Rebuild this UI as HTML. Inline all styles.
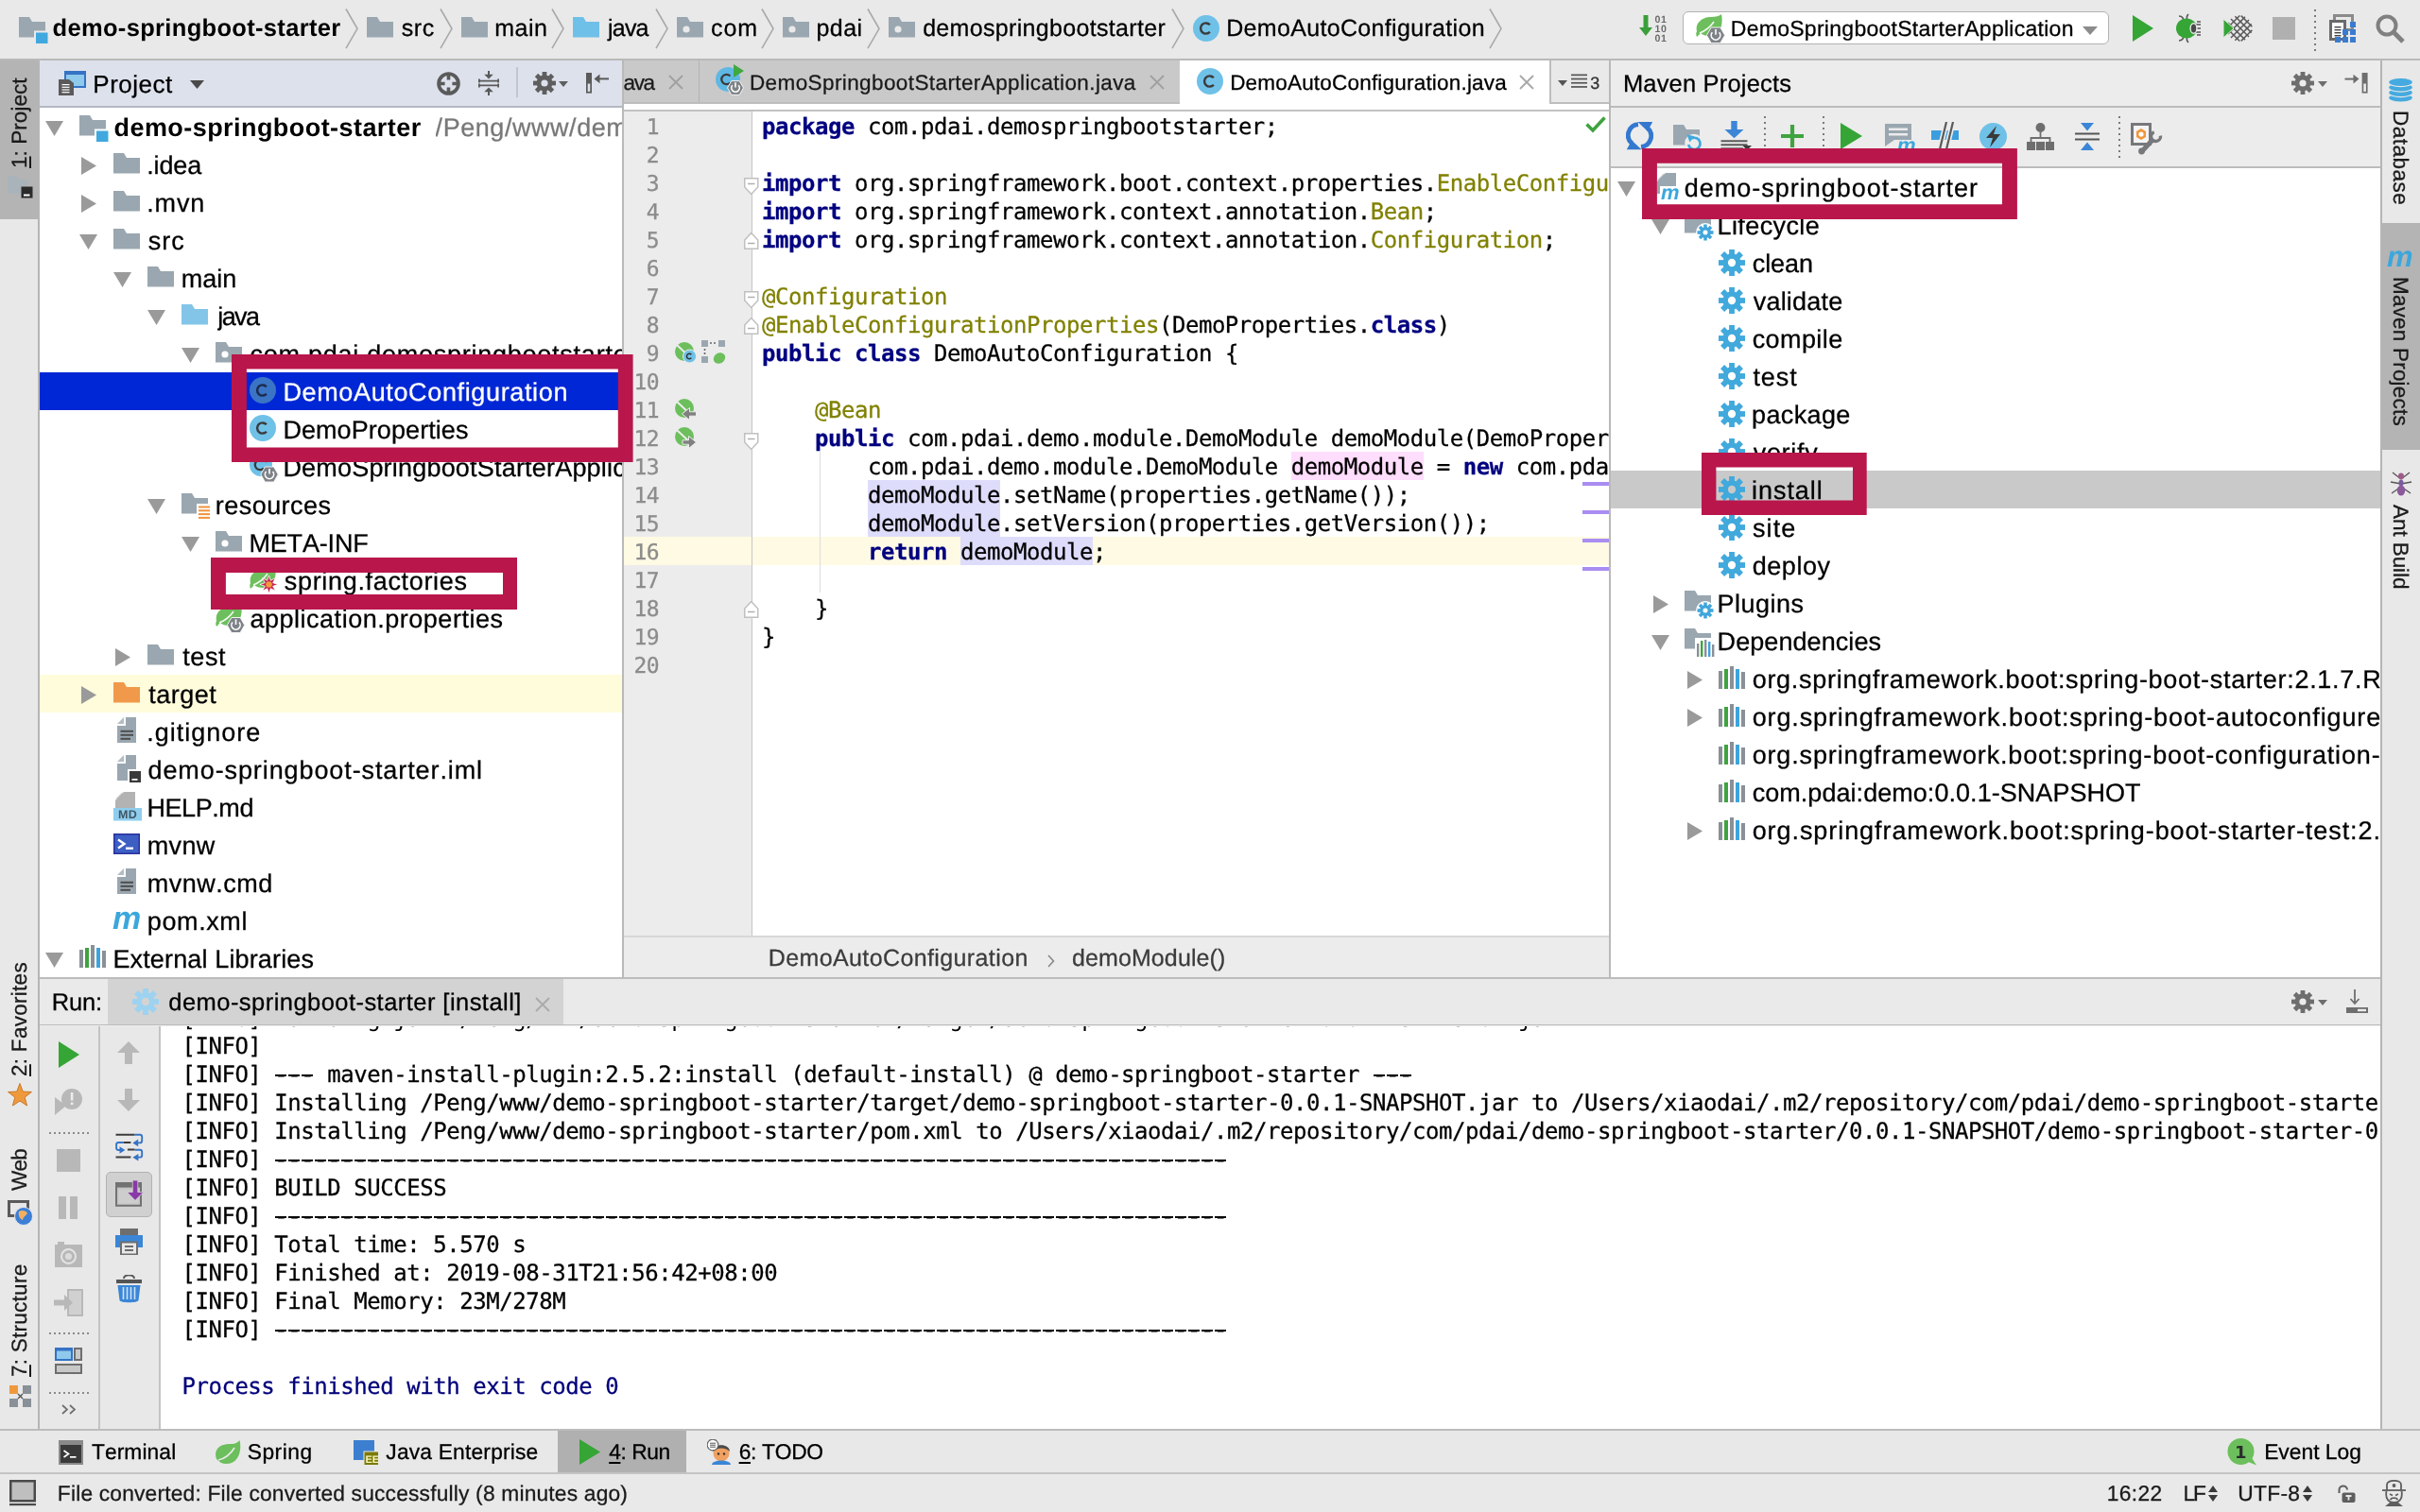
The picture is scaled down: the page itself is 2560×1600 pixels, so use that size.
<!DOCTYPE html>
<html lang="en"><head><meta charset="utf-8"><title>demo-springboot-starter - DemoAutoConfiguration.java</title>
<style>
*{margin:0;padding:0}html,body{width:2560px;height:1600px;overflow:hidden;background:#ececec}
body{position:relative;will-change:transform;font-kerning:none;-webkit-font-smoothing:antialiased;text-rendering:geometricPrecision}
body>div,body>span,body>svg,div>span{position:absolute;display:block;white-space:pre}
body>span{-webkit-text-stroke:0.28px}
span u{text-decoration:underline;text-decoration-thickness:1.5px;text-underline-offset:2.5px}
.code{font-family:"DejaVu Sans Mono","Liberation Mono",monospace;font-size:24px;line-height:30px;height:30px;letter-spacing:-0.453px;color:#000;overflow:hidden}
.code b{font-weight:bold}.code span{position:static;display:inline}
.ln{font-family:"DejaVu Sans Mono","Liberation Mono",monospace;font-size:23px;line-height:30px;height:30px;letter-spacing:-0.45px;color:#8c8c8c;text-align:right}
.con{font-family:"DejaVu Sans Mono","Liberation Mono",monospace;font-size:24px;line-height:30px;height:30px;letter-spacing:-0.453px;overflow:hidden}
</style></head>
<body>
<div style="left:0px;top:0px;width:2560px;height:62px;background:#e9e9e9;"></div>
<div style="left:0px;top:62px;width:2560px;height:2px;background:#b9b9b9;"></div>
<div style="left:0px;top:64px;width:40px;height:1449px;background:#e8e8e8;"></div>
<div style="left:40px;top:64px;width:2px;height:1449px;background:#b5b5b5;"></div>
<div style="left:0px;top:64px;width:40px;height:168px;background:#b4b4b4;"></div>
<div style="left:2520px;top:64px;width:40px;height:1449px;background:#e8e8e8;"></div>
<div style="left:2518px;top:64px;width:2px;height:1449px;background:#b5b5b5;"></div>
<div style="left:2520px;top:236px;width:40px;height:240px;background:#b4b4b4;"></div>
<div style="left:42px;top:64px;width:616px;height:48px;background:#dde1ec;"></div>
<div style="left:42px;top:112.4px;width:616px;height:1.6px;background:#b4b8c2;"></div>
<div style="left:42px;top:114px;width:616px;height:920px;background:#fff;"></div>
<div style="left:658px;top:64px;width:2px;height:970px;background:#b9b9b9;"></div>
<div style="left:660px;top:64px;width:1042px;height:46px;background:#c9c9c9;"></div>
<div style="left:660px;top:108px;width:1042px;height:2px;background:#bebebe;"></div>
<div style="left:660px;top:110px;width:1042px;height:6px;background:#fff;"></div>
<div style="left:660px;top:116px;width:1042px;height:2px;background:#c2c2c2;"></div>
<div style="left:660px;top:118px;width:135px;height:873px;background:#ececec;"></div>
<div style="left:796px;top:118px;width:906px;height:873px;background:#fff;"></div>
<div style="left:794.5px;top:118px;width:1.5px;height:873px;background:#c6c6c6;"></div>
<div style="left:660px;top:991px;width:1042px;height:43px;background:#ececec;"></div>
<div style="left:660px;top:990px;width:1042px;height:1.5px;background:#d8d8d8;"></div>
<div style="left:1702px;top:64px;width:2px;height:970px;background:#b9b9b9;"></div>
<div style="left:1704px;top:64px;width:814px;height:48px;background:#ececec;"></div>
<div style="left:1704px;top:112px;width:814px;height:2px;background:#bcbcbc;"></div>
<div style="left:1704px;top:114px;width:814px;height:62px;background:#ececec;"></div>
<div style="left:1704px;top:176px;width:814px;height:2px;background:#bcbcbc;"></div>
<div style="left:1704px;top:178px;width:814px;height:856px;background:#fff;"></div>
<div style="left:42px;top:1034px;width:2476px;height:2px;background:#bcbcbc;"></div>
<div style="left:42px;top:1036px;width:2476px;height:48px;background:#eaeaea;"></div>
<div style="left:42px;top:1083.6px;width:2476px;height:1.9px;background:#bcbcbc;"></div>
<div style="left:42px;top:1086px;width:62px;height:426px;background:#e8e8e8;"></div>
<div style="left:104px;top:1086px;width:2px;height:426px;background:#c3c3c3;"></div>
<div style="left:106px;top:1086px;width:62px;height:426px;background:#e8e8e8;"></div>
<div style="left:168px;top:1086px;width:2px;height:426px;background:#c3c3c3;"></div>
<div style="left:170px;top:1086px;width:2348px;height:426px;background:#fff;"></div>
<div style="left:0px;top:1512px;width:2560px;height:2px;background:#bcbcbc;"></div>
<div style="left:0px;top:1514px;width:2560px;height:44px;background:#e8e8e8;"></div>
<div style="left:0px;top:1558px;width:2560px;height:2px;background:#c4c4c4;"></div>
<div style="left:0px;top:1560px;width:2560px;height:40px;background:#e9e9e9;"></div>
<svg style="left:20px;top:18px;" width="31" height="28" viewBox="0 0 31 28"><path d="M0,0 H11 L14,5 H28 V21.5 H0 Z" fill="#9aa7b0"/><rect x="16" y="14.5" width="16" height="15" fill="#e9e9e9"/><rect x="18" y="16.5" width="12.5" height="11.5" fill="#40a8de"/></svg>
<span style="left:55.55px;top:14.16px;line-height:33px;height:33px;font-size:25.5px;color:#000;letter-spacing:0.324px;font-family:'Liberation Sans',sans-serif;font-weight:bold;-webkit-text-stroke:0;">demo-springboot-starter</span>
<svg style="left:365px;top:9px;" width="14" height="42.6" viewBox="0 0 14 42.6"><path d="M1,0.5 L13,21.3 L1,42.1" fill="none" stroke="#a9a9a9" stroke-width="1.6"/></svg>
<svg style="left:388px;top:18px;" width="28" height="22" viewBox="0 0 28 22"><path d="M0,0 H11 L14,5 H28 V21.5 H0 Z" fill="#9aa7b0"/></svg>
<span style="left:424.70px;top:13.93px;line-height:32px;height:32px;font-size:25px;color:#000;letter-spacing:0.565px;font-family:'Liberation Sans',sans-serif;">src</span>
<svg style="left:464.5px;top:9px;" width="14" height="42.6" viewBox="0 0 14 42.6"><path d="M1,0.5 L13,21.3 L1,42.1" fill="none" stroke="#a9a9a9" stroke-width="1.6"/></svg>
<svg style="left:488px;top:18px;" width="28" height="22" viewBox="0 0 28 22"><path d="M0,0 H11 L14,5 H28 V21.5 H0 Z" fill="#9aa7b0"/></svg>
<span style="left:523.34px;top:13.93px;line-height:32px;height:32px;font-size:25px;color:#000;letter-spacing:0.432px;font-family:'Liberation Sans',sans-serif;">main</span>
<svg style="left:582.5px;top:9px;" width="14" height="42.6" viewBox="0 0 14 42.6"><path d="M1,0.5 L13,21.3 L1,42.1" fill="none" stroke="#a9a9a9" stroke-width="1.6"/></svg>
<svg style="left:606px;top:18px;" width="28" height="22" viewBox="0 0 28 22"><path d="M0,0 H11 L14,5 H28 V21.5 H0 Z" fill="#6fc0e8"/></svg>
<span style="left:643.11px;top:13.93px;line-height:32px;height:32px;font-size:25px;color:#000;letter-spacing:-0.824px;font-family:'Liberation Sans',sans-serif;">java</span>
<svg style="left:692.5px;top:9px;" width="14" height="42.6" viewBox="0 0 14 42.6"><path d="M1,0.5 L13,21.3 L1,42.1" fill="none" stroke="#a9a9a9" stroke-width="1.6"/></svg>
<svg style="left:716px;top:18px;" width="28" height="22" viewBox="0 0 28 22"><path d="M0,0 H11 L14,5 H28 V21.5 H0 Z" fill="#9aa7b0"/><circle cx="10" cy="13" r="3.6" fill="#e9e9e9"/></svg>
<span style="left:751.94px;top:13.93px;line-height:32px;height:32px;font-size:25px;color:#000;letter-spacing:0.940px;font-family:'Liberation Sans',sans-serif;">com</span>
<svg style="left:804.7px;top:9px;" width="14" height="42.6" viewBox="0 0 14 42.6"><path d="M1,0.5 L13,21.3 L1,42.1" fill="none" stroke="#a9a9a9" stroke-width="1.6"/></svg>
<svg style="left:828px;top:18px;" width="28" height="22" viewBox="0 0 28 22"><path d="M0,0 H11 L14,5 H28 V21.5 H0 Z" fill="#9aa7b0"/><circle cx="10" cy="13" r="3.6" fill="#e9e9e9"/></svg>
<span style="left:863.39px;top:13.93px;line-height:32px;height:32px;font-size:25px;color:#000;letter-spacing:0.510px;font-family:'Liberation Sans',sans-serif;">pdai</span>
<svg style="left:916.5px;top:9px;" width="14" height="42.6" viewBox="0 0 14 42.6"><path d="M1,0.5 L13,21.3 L1,42.1" fill="none" stroke="#a9a9a9" stroke-width="1.6"/></svg>
<svg style="left:940px;top:18px;" width="28" height="22" viewBox="0 0 28 22"><path d="M0,0 H11 L14,5 H28 V21.5 H0 Z" fill="#9aa7b0"/><circle cx="10" cy="13" r="3.6" fill="#e9e9e9"/></svg>
<span style="left:976.15px;top:13.93px;line-height:32px;height:32px;font-size:25px;color:#000;letter-spacing:0.322px;font-family:'Liberation Sans',sans-serif;">demospringbootstarter</span>
<svg style="left:1238.5px;top:9px;" width="14" height="42.6" viewBox="0 0 14 42.6"><path d="M1,0.5 L13,21.3 L1,42.1" fill="none" stroke="#a9a9a9" stroke-width="1.6"/></svg>
<svg style="left:1261.8px;top:16px;" width="28" height="28" viewBox="0 0 28 28"><circle cx="14.0" cy="14.0" r="14.0" fill="#6fc1e8"/><path d="M17.86,10.25 A5.6000000000000005,5.6000000000000005 0 1 0 17.86,17.75" fill="none" stroke="#3b3b3b" stroke-width="2.4499999999999997"/></svg>
<span style="left:1297.15px;top:13.93px;line-height:32px;height:32px;font-size:25px;color:#000;letter-spacing:0.333px;font-family:'Liberation Sans',sans-serif;">DemoAutoConfiguration</span>
<svg style="left:1574.5px;top:9px;" width="14" height="42.6" viewBox="0 0 14 42.6"><path d="M1,0.5 L13,21.3 L1,42.1" fill="none" stroke="#a9a9a9" stroke-width="1.6"/></svg>
<svg style="left:1734px;top:16px;overflow:visible;" width="30" height="28" viewBox="0 0 30 28"><path d="M4.5,0 H9.5 V13 H14 L7,22 L0,13 H4.5 Z" fill="#3a9e3a"/><text x="16.6" y="8.3" font-family="Liberation Sans,sans-serif" font-weight="bold" font-size="10.6" fill="#6a6a6a" letter-spacing="0.4">01</text><text x="16.6" y="18.3" font-family="Liberation Sans,sans-serif" font-weight="bold" font-size="10.6" fill="#6a6a6a" letter-spacing="0.4">10</text><text x="16.6" y="28.3" font-family="Liberation Sans,sans-serif" font-weight="bold" font-size="10.6" fill="#6a6a6a" letter-spacing="0.4">01</text></svg>
<div style="left:1780.3px;top:12px;width:448.5px;height:32.5px;background:#fff;border:1.5px solid #b2b2b2;border-radius:6px;box-sizing:content-box"></div>
<svg style="left:1794px;top:14px;overflow:visible;" width="32" height="32" viewBox="0 0 32 32"><g transform="translate(0,2)"><path d="M1,17 C-1,8 7,2 16,2 C21,2 25,1 27,-1 C29,8 27,22 14,22 C10,22 7,21 5,19 C3,21 2,22 1,23 C0,21 0,19 1,17 Z" fill="#6cbf5c"/><path d="M4,19 C9,17 15,13 19,7" fill="none" stroke="#fff" stroke-width="1.6" opacity="0.9"/></g><polygon points="30.6,23.3 25.8,31.6 16.2,31.6 11.4,23.3 16.2,15.0 25.8,15.0" fill="#7f8388" stroke="#f4f4f4" stroke-width="1"/><path d="M17.32,20.21 A4.80,4.80 0 1 0 24.68,20.21" fill="none" stroke="#fff" stroke-width="1.6"/><path d="M21,17.0 V22.8" stroke="#fff" stroke-width="1.6"/></svg>
<span style="left:1830.81px;top:15.03px;line-height:30px;height:30px;font-size:23px;color:#000;letter-spacing:0.275px;font-family:'Liberation Sans',sans-serif;">DemoSpringbootStarterApplication</span>
<svg style="left:2203px;top:28px;" width="16" height="9" viewBox="0 0 16 9"><path d="M0,0 H16 L8.0,9 Z" fill="#8c8c8c"/></svg>
<svg style="left:2256px;top:16px;" width="22" height="28" viewBox="0 0 22 28"><path d="M0,0 L22,14.0 L0,28 Z" fill="#35a535"/></svg>
<svg style="left:2301px;top:14px;" width="30" height="32" viewBox="0 0 30 32"><g stroke="#555" stroke-width="1.6" fill="none"><path d="M4,3 C8,3 9,6 9,9 M4,29 C8,29 9,26 9,23 M14,1 C12,3 12,5 13,7 M14,31 C12,29 12,27 13,25 M27,9 H23 M27,23 H23 M22,12 h5 M22,16 h5 M22,20 h5"/></g><ellipse cx="12" cy="16" rx="11" ry="10.5" fill="#35a535"/><ellipse cx="19.5" cy="16" rx="3.4" ry="5.2" fill="#4a4a4a" stroke="#e9e9e9" stroke-width="1.4"/></svg>
<svg style="left:2352px;top:16px;" width="32" height="28" viewBox="0 0 32 28"><path d="M3.50,13.68 L17.32,27.50" stroke="#5a5a5a" stroke-width="1.5"/><path d="M3.50,14.32 L17.32,0.50" stroke="#5a5a5a" stroke-width="1.5"/><path d="M4.90,8.01 L22.99,26.10" stroke="#5a5a5a" stroke-width="1.5"/><path d="M4.90,19.99 L22.99,1.90" stroke="#5a5a5a" stroke-width="1.5"/><path d="M7.95,3.98 L27.02,23.05" stroke="#5a5a5a" stroke-width="1.5"/><path d="M7.95,24.02 L27.02,4.95" stroke="#5a5a5a" stroke-width="1.5"/><path d="M12.36,1.32 L29.68,18.64" stroke="#5a5a5a" stroke-width="1.5"/><path d="M12.36,26.68 L29.68,9.36" stroke="#5a5a5a" stroke-width="1.5"/><path d="M18.71,0.61 L30.39,12.29" stroke="#5a5a5a" stroke-width="1.5"/><path d="M18.71,27.39 L30.39,15.71" stroke="#5a5a5a" stroke-width="1.5"/><path d="M0,4 L11,14 L0,24 Z" fill="#35a535" stroke="#e9e9e9" stroke-width="1"/></svg>
<div style="left:2404px;top:18px;width:24px;height:24px;background:#b0b0b0;"></div>
<svg style="left:2448px;top:10px;" width="2" height="44" viewBox="0 0 2 44"><rect x="0" y="0" width="2" height="2" fill="#7a7a7a"/><rect x="0" y="6" width="2" height="2" fill="#7a7a7a"/><rect x="0" y="12" width="2" height="2" fill="#7a7a7a"/><rect x="0" y="18" width="2" height="2" fill="#7a7a7a"/><rect x="0" y="24" width="2" height="2" fill="#7a7a7a"/><rect x="0" y="30" width="2" height="2" fill="#7a7a7a"/><rect x="0" y="36" width="2" height="2" fill="#7a7a7a"/><rect x="0" y="42" width="2" height="2" fill="#7a7a7a"/></svg>
<svg style="left:2464px;top:15px;" width="29" height="31" viewBox="0 0 29 31"><rect x="5.5" y="1.5" width="19" height="15" fill="none" stroke="#8a8a8a" stroke-width="3"/><rect x="1.5" y="7.5" width="15" height="19" fill="#fff" stroke="#6a6a6a" stroke-width="3"/><rect x="5.5" y="13" width="7" height="1.4" fill="#444"/><rect x="5.5" y="16" width="7" height="1.4" fill="#444"/><rect x="5.5" y="19" width="7" height="1.4" fill="#444"/><rect x="5.5" y="22" width="7" height="1.4" fill="#444"/><rect x="22" y="8" width="6" height="6" fill="#3a7bd0"/><rect x="14" y="16" width="6" height="6" fill="#3a7bd0"/><rect x="22" y="16" width="6" height="6" fill="#3a7bd0"/><rect x="6" y="24" width="6" height="6" fill="#3a7bd0"/><rect x="14" y="24" width="6" height="6" fill="#3a7bd0"/><rect x="22" y="24" width="6" height="6" fill="#3a7bd0"/></svg>
<svg style="left:2513px;top:15px;" width="32" height="32" viewBox="0 0 32 32"><circle cx="12" cy="12" r="9.5" fill="none" stroke="#808080" stroke-width="4"/><path d="M19,19 L29,29" stroke="#808080" stroke-width="5"/></svg>
<svg style="left:62px;top:75px;" width="30" height="28" viewBox="0 0 30 28"><rect x="7" y="1" width="21" height="16" fill="#8fc9ec" stroke="#3573c4" stroke-width="2"/><rect x="7" y="0" width="21" height="4" fill="#3573c4"/><path d="M0,9 H11 L16,13 V26 H0 Z" fill="#5a5a5a"/><rect x="3.5" y="14.0" width="8" height="1.2" fill="#fff"/><rect x="3.5" y="16.7" width="8" height="1.2" fill="#fff"/><rect x="3.5" y="19.4" width="8" height="1.2" fill="#fff"/><rect x="3.5" y="22.1" width="8" height="1.2" fill="#fff"/></svg>
<span style="left:98.37px;top:72.19px;line-height:34px;height:34px;font-size:26px;color:#000;letter-spacing:0.484px;font-family:'Liberation Sans',sans-serif;">Project</span>
<svg style="left:201px;top:84.5px;" width="15" height="9" viewBox="0 0 15 9"><path d="M0,0 H15 L7.5,9 Z" fill="#4a4a4a"/></svg>
<svg style="left:461.5px;top:75.5px;" width="25" height="25" viewBox="0 0 25 25"><circle cx="12.5" cy="12.5" r="10.4" fill="none" stroke="#5a5a5a" stroke-width="3.8"/><path d="M12.5,2 V8.6 M12.5,16.4 V23 M2,12.5 H8.6 M16.4,12.5 H23" stroke="#5a5a5a" stroke-width="3.6"/></svg>
<svg style="left:506px;top:74.5px;" width="22" height="27" viewBox="0 0 22 27"><path d="M0,10.6 H22 M0,15.4 H22 M0.9,8.5 V12.5 M21.1,8.5 V12.5 M0.9,13.5 V17.5 M21.1,13.5 V17.5" stroke="#5a5a5a" stroke-width="1.8"/><path d="M11,0 V5 M11,26 V21" stroke="#5a5a5a" stroke-width="2"/><path d="M6.2,3.8 H15.8 L11,8.6 Z M6.2,22.2 H15.8 L11,17.4 Z" fill="#5a5a5a"/></svg>
<div style="left:546px;top:71px;width:1.5px;height:32px;background:#c2c5ce;"></div>
<svg style="left:564px;top:76px;" width="24" height="24" viewBox="0 0 24 24"><circle cx="12.0" cy="12.0" r="8.40" fill="#5e5e5e"/><rect x="9.60" y="0.00" width="4.80" height="24.00" fill="#5e5e5e" transform="rotate(0 12.0 12.0)"/><rect x="9.60" y="0.00" width="4.80" height="24.00" fill="#5e5e5e" transform="rotate(45 12.0 12.0)"/><rect x="9.60" y="0.00" width="4.80" height="24.00" fill="#5e5e5e" transform="rotate(90 12.0 12.0)"/><rect x="9.60" y="0.00" width="4.80" height="24.00" fill="#5e5e5e" transform="rotate(135 12.0 12.0)"/><circle cx="12.0" cy="12.0" r="3.60" fill="#dde1ec"/></svg>
<svg style="left:591px;top:86px;" width="10" height="6" viewBox="0 0 10 6"><path d="M0,0 H10 L5.0,6 Z" fill="#5e5e5e"/></svg>
<svg style="left:620px;top:77.4px;" width="26" height="22" viewBox="0 0 26 22"><rect x="0" y="0" width="6" height="21.6" fill="#5a5a5a"/><rect x="1.7" y="11.5" width="2.6" height="8.4" fill="#dde1ec"/><path d="M24,6.4 H12" stroke="#5a5a5a" stroke-width="2"/><path d="M8.5,6.4 L14.5,1.6 V11.2 Z" fill="#5a5a5a"/></svg>
<div style="left:42px;top:714px;width:616px;height:40px;background:#fffcdb;"></div>
<div style="left:42px;top:394px;width:616px;height:40px;background:#0027d5;"></div>
<svg style="left:48px;top:128px;" width="19" height="16" viewBox="0 0 19 16"><path d="M0,0 H19 L9.5,16 Z" fill="#9a9a9a"/></svg>
<svg style="left:84px;top:122.3px;" width="31" height="28" viewBox="0 0 31 28"><path d="M0,0 H11 L14,5 H28 V21.5 H0 Z" fill="#9aa7b0"/><rect x="16" y="14.5" width="16" height="15" fill="#fff"/><rect x="18" y="16.5" width="12.5" height="11.5" fill="#40a8de"/></svg>
<span style="left:120.49px;top:118.34px;line-height:35px;height:35px;font-size:27px;color:#000;letter-spacing:0.441px;font-family:'Liberation Sans',sans-serif;font-weight:bold;-webkit-text-stroke:0;width:537.51px;overflow:hidden;">demo-springboot-starter</span>
<span style="left:460.60px;top:118.14px;line-height:35px;height:35px;font-size:27px;color:#787878;letter-spacing:0.550px;font-family:'Liberation Sans',sans-serif;width:197.40px;overflow:hidden;">/Peng/www/demo-springboot-starter</span>
<svg style="left:85.5px;top:165.5px;" width="16" height="19" viewBox="0 0 16 19"><path d="M0,0 V19 L16,9.5 Z" fill="#9a9a9a"/></svg>
<svg style="left:120px;top:162.3px;" width="28" height="22" viewBox="0 0 28 22"><path d="M0,0 H11 L14,5 H28 V21.5 H0 Z" fill="#9aa7b0"/></svg>
<span style="left:155.13px;top:158.14px;line-height:35px;height:35px;font-size:27px;color:#000;letter-spacing:-0.096px;font-family:'Liberation Sans',sans-serif;width:502.87px;overflow:hidden;">.idea</span>
<svg style="left:85.5px;top:205.5px;" width="16" height="19" viewBox="0 0 16 19"><path d="M0,0 V19 L16,9.5 Z" fill="#9a9a9a"/></svg>
<svg style="left:120px;top:202.3px;" width="28" height="22" viewBox="0 0 28 22"><path d="M0,0 H11 L14,5 H28 V21.5 H0 Z" fill="#9aa7b0"/></svg>
<span style="left:155.13px;top:198.14px;line-height:35px;height:35px;font-size:27px;color:#000;letter-spacing:0.903px;font-family:'Liberation Sans',sans-serif;width:502.87px;overflow:hidden;">.mvn</span>
<svg style="left:84px;top:248px;" width="19" height="16" viewBox="0 0 19 16"><path d="M0,0 H19 L9.5,16 Z" fill="#9a9a9a"/></svg>
<svg style="left:120px;top:242.3px;" width="28" height="22" viewBox="0 0 28 22"><path d="M0,0 H11 L14,5 H28 V21.5 H0 Z" fill="#9aa7b0"/></svg>
<span style="left:156.85px;top:238.14px;line-height:35px;height:35px;font-size:27px;color:#000;letter-spacing:0.936px;font-family:'Liberation Sans',sans-serif;width:501.15px;overflow:hidden;">src</span>
<svg style="left:120px;top:288px;" width="19" height="16" viewBox="0 0 19 16"><path d="M0,0 H19 L9.5,16 Z" fill="#9a9a9a"/></svg>
<svg style="left:156px;top:282.3px;" width="28" height="22" viewBox="0 0 28 22"><path d="M0,0 H11 L14,5 H28 V21.5 H0 Z" fill="#9aa7b0"/></svg>
<span style="left:191.81px;top:278.14px;line-height:35px;height:35px;font-size:27px;color:#000;letter-spacing:-0.025px;font-family:'Liberation Sans',sans-serif;width:466.19px;overflow:hidden;">main</span>
<svg style="left:156px;top:328px;" width="19" height="16" viewBox="0 0 19 16"><path d="M0,0 H19 L9.5,16 Z" fill="#9a9a9a"/></svg>
<svg style="left:192px;top:322.3px;" width="28" height="22" viewBox="0 0 28 22"><path d="M0,0 H11 L14,5 H28 V21.5 H0 Z" fill="#83c5e8"/></svg>
<span style="left:230.26px;top:318.14px;line-height:35px;height:35px;font-size:27px;color:#000;letter-spacing:-1.597px;font-family:'Liberation Sans',sans-serif;width:427.74px;overflow:hidden;">java</span>
<svg style="left:192px;top:368px;" width="19" height="16" viewBox="0 0 19 16"><path d="M0,0 H19 L9.5,16 Z" fill="#9a9a9a"/></svg>
<svg style="left:228px;top:362.3px;" width="28" height="22" viewBox="0 0 28 22"><path d="M0,0 H11 L14,5 H28 V21.5 H0 Z" fill="#9aa7b0"/><circle cx="10" cy="13" r="3.6" fill="#fff"/></svg>
<span style="left:264.45px;top:358.14px;line-height:35px;height:35px;font-size:27px;color:#000;letter-spacing:0.750px;font-family:'Liberation Sans',sans-serif;width:393.55px;overflow:hidden;">com.pdai.demospringbootstarter</span>
<svg style="left:264px;top:399.3px;" width="28" height="28" viewBox="0 0 28 28"><circle cx="14.0" cy="14.0" r="14.0" fill="#3a74c5"/><path d="M17.86,10.25 A5.6000000000000005,5.6000000000000005 0 1 0 17.86,17.75" fill="none" stroke="#1d2a4a" stroke-width="2.4499999999999997"/></svg>
<span style="left:299.39px;top:398.14px;line-height:35px;height:35px;font-size:27px;color:#fff;letter-spacing:0.645px;font-family:'Liberation Sans',sans-serif;width:358.61px;overflow:hidden;">DemoAutoConfiguration</span>
<svg style="left:264px;top:439.3px;" width="28" height="28" viewBox="0 0 28 28"><circle cx="14.0" cy="14.0" r="14.0" fill="#6fc1e8"/><path d="M17.86,10.25 A5.6000000000000005,5.6000000000000005 0 1 0 17.86,17.75" fill="none" stroke="#3b3b3b" stroke-width="2.4499999999999997"/></svg>
<span style="left:299.39px;top:438.14px;line-height:35px;height:35px;font-size:27px;color:#000;letter-spacing:0.078px;font-family:'Liberation Sans',sans-serif;width:358.61px;overflow:hidden;">DemoProperties</span>
<svg style="left:264px;top:478.3px;" width="32" height="34" viewBox="0 0 32 34"><circle cx="12" cy="14" r="12" fill="#6fc1e8"/><path d="M14.86,10.52 A5.2,5.2 0 1 0 14.86,17.48" fill="none" stroke="#3b3b3b" stroke-width="2.3"/><path d="M17,0 L27,6 L17,12 Z" fill="#3fa83f"/><polygon points="30.2,24.0 25.6,32.0 16.4,32.0 11.8,24.0 16.4,16.0 25.6,16.0" fill="#7f8388" stroke="#f4f4f4" stroke-width="1"/><path d="M17.48,21.04 A4.60,4.60 0 1 0 24.52,21.04" fill="none" stroke="#fff" stroke-width="1.6"/><path d="M21,17.9 V23.5" stroke="#fff" stroke-width="1.6"/></svg>
<span style="left:299.39px;top:478.14px;line-height:35px;height:35px;font-size:27px;color:#000;letter-spacing:0.198px;font-family:'Liberation Sans',sans-serif;width:358.61px;overflow:hidden;">DemoSpringbootStarterApplication</span>
<svg style="left:156px;top:528px;" width="19" height="16" viewBox="0 0 19 16"><path d="M0,0 H19 L9.5,16 Z" fill="#9a9a9a"/></svg>
<svg style="left:192px;top:522.3px;" width="31" height="29" viewBox="0 0 31 29"><path d="M0,0 H11 L14,5 H28 V21.5 H0 Z" fill="#9aa7b0"/><rect x="16" y="11" width="14" height="18" fill="#fff"/><rect x="18" y="13.5" width="12" height="2" fill="#f0933a"/><rect x="18" y="17.3" width="12" height="2" fill="#f0933a"/><rect x="18" y="21.1" width="12" height="2" fill="#f0933a"/><rect x="18" y="24.9" width="12" height="2" fill="#f0933a"/></svg>
<span style="left:227.81px;top:518.14px;line-height:35px;height:35px;font-size:27px;color:#000;letter-spacing:0.453px;font-family:'Liberation Sans',sans-serif;width:430.19px;overflow:hidden;">resources</span>
<svg style="left:192px;top:568px;" width="19" height="16" viewBox="0 0 19 16"><path d="M0,0 H19 L9.5,16 Z" fill="#9a9a9a"/></svg>
<svg style="left:228px;top:562.3px;" width="28" height="22" viewBox="0 0 28 22"><path d="M0,0 H11 L14,5 H28 V21.5 H0 Z" fill="#9aa7b0"/><circle cx="10" cy="13" r="3.6" fill="#fff"/></svg>
<span style="left:263.39px;top:558.14px;line-height:35px;height:35px;font-size:27px;color:#000;letter-spacing:-0.156px;font-family:'Liberation Sans',sans-serif;width:394.61px;overflow:hidden;">META-INF</span>
<svg style="left:264px;top:599.3px;overflow:visible;" width="30" height="29" viewBox="0 0 30 29"><g transform="translate(0,1)"><path d="M1,17 C-1,8 7,2 16,2 C21,2 25,1 27,-1 C29,8 27,22 14,22 C10,22 7,21 5,19 C3,21 2,22 1,23 C0,21 0,19 1,17 Z" fill="#6cbf5c"/><path d="M4,19 C9,17 15,13 19,7" fill="none" stroke="#fff" stroke-width="1.6" opacity="0.9"/></g><polygon points="20.5,9.9 22.3,15.3 27.3,12.7 24.7,17.7 30.1,19.5 24.7,21.3 27.3,26.3 22.3,23.7 20.5,29.1 18.7,23.7 13.7,26.3 16.3,21.3 10.9,19.5 16.3,17.7 13.7,12.7 18.7,15.3" fill="#c8214f" stroke="#fff" stroke-width="0.8"/><circle cx="20.5" cy="19.5" r="3.3" fill="#f19a3c"/></svg>
<span style="left:300.85px;top:598.14px;line-height:35px;height:35px;font-size:27px;color:#000;letter-spacing:0.670px;font-family:'Liberation Sans',sans-serif;width:357.15px;overflow:hidden;">spring.factories</span>
<svg style="left:228px;top:639.3px;overflow:visible;" width="32" height="33" viewBox="0 0 32 33"><g transform="translate(0,1)"><path d="M1,17 C-1,8 7,2 16,2 C21,2 25,1 27,-1 C29,8 27,22 14,22 C10,22 7,21 5,19 C3,21 2,22 1,23 C0,21 0,19 1,17 Z" fill="#6cbf5c"/><path d="M4,19 C9,17 15,13 19,7" fill="none" stroke="#fff" stroke-width="1.6" opacity="0.9"/></g><polygon points="30.7,22.5 26.1,30.5 16.9,30.5 12.3,22.5 16.9,14.5 26.1,14.5" fill="#7f8388" stroke="#f4f4f4" stroke-width="1"/><path d="M17.98,19.54 A4.60,4.60 0 1 0 25.02,19.54" fill="none" stroke="#fff" stroke-width="1.6"/><path d="M21.5,16.4 V22.0" stroke="#fff" stroke-width="1.6"/></svg>
<span style="left:264.45px;top:638.14px;line-height:35px;height:35px;font-size:27px;color:#000;letter-spacing:0.517px;font-family:'Liberation Sans',sans-serif;width:393.55px;overflow:hidden;">application.properties</span>
<svg style="left:121.5px;top:685.5px;" width="16" height="19" viewBox="0 0 16 19"><path d="M0,0 V19 L16,9.5 Z" fill="#9a9a9a"/></svg>
<svg style="left:156px;top:682.3px;" width="28" height="22" viewBox="0 0 28 22"><path d="M0,0 H11 L14,5 H28 V21.5 H0 Z" fill="#9aa7b0"/></svg>
<span style="left:193.19px;top:678.14px;line-height:35px;height:35px;font-size:27px;color:#000;letter-spacing:0.629px;font-family:'Liberation Sans',sans-serif;width:464.81px;overflow:hidden;">test</span>
<svg style="left:85.5px;top:725.5px;" width="16" height="19" viewBox="0 0 16 19"><path d="M0,0 V19 L16,9.5 Z" fill="#9a9a9a"/></svg>
<svg style="left:120px;top:722.3px;" width="28" height="22" viewBox="0 0 28 22"><path d="M0,0 H11 L14,5 H28 V21.5 H0 Z" fill="#f0994a"/></svg>
<span style="left:157.19px;top:718.14px;line-height:35px;height:35px;font-size:27px;color:#000;letter-spacing:0.513px;font-family:'Liberation Sans',sans-serif;width:500.81px;overflow:hidden;">target</span>
<svg style="left:124px;top:759.3px;" width="26" height="30" viewBox="0 0 26 30"><path d="M9,0 H20 V27 H0 V9 H9 Z" fill="#9aa7b0"/><path d="M7,0 V7 H0 Z" fill="#9aa7b0" opacity="0.75"/><rect x="3.5" y="13.8" width="13.5" height="2" fill="#4d4d4d"/><rect x="3.5" y="17.8" width="13.5" height="2" fill="#4d4d4d"/><rect x="3.5" y="21.8" width="10.5" height="2" fill="#4d4d4d"/></svg>
<span style="left:155.13px;top:758.14px;line-height:35px;height:35px;font-size:27px;color:#000;letter-spacing:0.999px;font-family:'Liberation Sans',sans-serif;width:502.87px;overflow:hidden;">.gitignore</span>
<svg style="left:124px;top:799.3px;" width="26" height="30" viewBox="0 0 26 30"><path d="M9,0 H20 V27 H0 V9 H9 Z" fill="#9aa7b0"/><path d="M7,0 V7 H0 Z" fill="#9aa7b0" opacity="0.75"/><rect x="11" y="15" width="14" height="14" fill="#fff"/><rect x="13" y="17" width="12" height="12" fill="#3a3a3a"/><rect x="15.5" y="25" width="6" height="1.8" fill="#fff"/></svg>
<span style="left:156.47px;top:798.14px;line-height:35px;height:35px;font-size:27px;color:#000;letter-spacing:0.905px;font-family:'Liberation Sans',sans-serif;width:501.53px;overflow:hidden;">demo-springboot-starter.iml</span>
<svg style="left:120px;top:838.3px;" width="30" height="31" viewBox="0 0 30 31"><path d="M11,0 H23 V17 H2 V9 Z" fill="#b3b3b3"/><path d="M9.5,0 V7.5 H2 Z" fill="#b3b3b3" opacity="0.6"/><rect x="0" y="17" width="30" height="13.5" fill="#8fcdee"/><text x="15" y="28.3" text-anchor="middle" font-family="Liberation Sans,sans-serif" font-weight="bold" font-size="12.5" fill="#3f5666" letter-spacing="0.3">MD</text></svg>
<span style="left:155.39px;top:838.14px;line-height:35px;height:35px;font-size:27px;color:#000;letter-spacing:-0.414px;font-family:'Liberation Sans',sans-serif;width:502.61px;overflow:hidden;">HELP.md</span>
<svg style="left:120px;top:882.3px;" width="28" height="22" viewBox="0 0 28 22"><rect x="0.75" y="0.75" width="26.5" height="20.5" fill="#3d5fc4" stroke="#2a2f9e" stroke-width="1.5"/><path d="M5,6.5 L11.5,11 L5,15.5" fill="none" stroke="#fff" stroke-width="2.4"/><rect x="13" y="14.5" width="8" height="2.4" fill="#fff"/></svg>
<span style="left:155.81px;top:878.14px;line-height:35px;height:35px;font-size:27px;color:#000;letter-spacing:0.307px;font-family:'Liberation Sans',sans-serif;width:502.19px;overflow:hidden;">mvnw</span>
<svg style="left:124px;top:919.3px;" width="26" height="30" viewBox="0 0 26 30"><path d="M9,0 H20 V27 H0 V9 H9 Z" fill="#9aa7b0"/><path d="M7,0 V7 H0 Z" fill="#9aa7b0" opacity="0.75"/><rect x="3.5" y="13.8" width="13.5" height="2" fill="#4d4d4d"/><rect x="3.5" y="17.8" width="13.5" height="2" fill="#4d4d4d"/><rect x="3.5" y="21.8" width="10.5" height="2" fill="#4d4d4d"/></svg>
<span style="left:155.81px;top:918.14px;line-height:35px;height:35px;font-size:27px;color:#000;letter-spacing:0.503px;font-family:'Liberation Sans',sans-serif;width:502.19px;overflow:hidden;">mvnw.cmd</span>
<svg style="left:120px;top:959.3px;overflow:visible;" width="34" height="30" viewBox="0 0 34 30"><text x="-1" y="24" font-family="Liberation Sans,sans-serif" font-style="italic" font-weight="bold" font-size="34" fill="#3ba7dc">m</text></svg>
<span style="left:155.86px;top:958.14px;line-height:35px;height:35px;font-size:27px;color:#000;letter-spacing:0.589px;font-family:'Liberation Sans',sans-serif;width:502.14px;overflow:hidden;">pom.xml</span>
<svg style="left:48px;top:1008px;" width="19" height="16" viewBox="0 0 19 16"><path d="M0,0 H19 L9.5,16 Z" fill="#9a9a9a"/></svg>
<svg style="left:84px;top:1000.3px;" width="28" height="24" viewBox="0 0 28 24"><rect x="0" y="5" width="4" height="19" fill="#8a9097"/><rect x="6" y="3" width="4" height="21" fill="#3fa33f"/><rect x="12" y="0" width="4" height="24" fill="#8a9097"/><rect x="18" y="3" width="4" height="21" fill="#3da4dc"/><rect x="24" y="6" width="4" height="18" fill="#8a9097"/></svg>
<span style="left:119.39px;top:998.14px;line-height:35px;height:35px;font-size:27px;color:#000;letter-spacing:0.147px;font-family:'Liberation Sans',sans-serif;width:538.61px;overflow:hidden;">External Libraries</span>
<div style="left:658px;top:114px;width:2px;height:920px;background:#b9b9b9;"></div>
<span style="left:659.54px;top:73.00px;line-height:29px;height:29px;font-size:22.5px;color:#1a1a1a;letter-spacing:-1.411px;font-family:'Liberation Sans',sans-serif;">ava</span>
<svg style="left:707px;top:79px;" width="16" height="16" viewBox="0 0 16 16"><path d="M1,1 L15,15 M15,1 L1,15" stroke="#a0a0a0" stroke-width="1.8" fill="none"/></svg>
<div style="left:738.5px;top:64px;width:1.5px;height:44px;background:#b4b4b4;"></div>
<svg style="left:757px;top:68px;" width="32" height="34" viewBox="0 0 32 34"><circle cx="13" cy="16" r="13" fill="#5fb8e4"/><path d="M15.36,12.52 A5.2,5.2 0 1 0 15.36,19.48" fill="none" stroke="#3b3b3b" stroke-width="2.3"/><path d="M19,0 L30,7 L19,14 Z" fill="#3fa83f"/><polygon points="29.5,25.0 25.2,32.4 16.8,32.4 12.5,25.0 16.7,17.6 25.2,17.6" fill="#7f8388" stroke="#f4f4f4" stroke-width="1"/><path d="M17.74,22.27 A4.25,4.25 0 1 0 24.26,22.27" fill="none" stroke="#fff" stroke-width="1.6"/><path d="M21,19.25 V24.5" stroke="#fff" stroke-width="1.6"/></svg>
<span style="left:792.95px;top:73.00px;line-height:29px;height:29px;font-size:22.5px;color:#1a1a1a;letter-spacing:0.402px;font-family:'Liberation Sans',sans-serif;">DemoSpringbootStarterApplication.java</span>
<svg style="left:1215.5px;top:79px;" width="16" height="16" viewBox="0 0 16 16"><path d="M1,1 L15,15 M15,1 L1,15" stroke="#a0a0a0" stroke-width="1.8" fill="none"/></svg>
<div style="left:1248px;top:64px;width:391px;height:52px;background:#fff;"></div>
<svg style="left:1266px;top:72px;" width="28" height="28" viewBox="0 0 28 28"><circle cx="14.0" cy="14.0" r="14.0" fill="#6fc1e8"/><path d="M17.86,10.25 A5.6000000000000005,5.6000000000000005 0 1 0 17.86,17.75" fill="none" stroke="#3b3b3b" stroke-width="2.4499999999999997"/></svg>
<span style="left:1301.15px;top:73.00px;line-height:29px;height:29px;font-size:22.5px;color:#000;letter-spacing:0.199px;font-family:'Liberation Sans',sans-serif;">DemoAutoConfiguration.java</span>
<svg style="left:1607px;top:79px;" width="16" height="16" viewBox="0 0 16 16"><path d="M1,1 L15,15 M15,1 L1,15" stroke="#a8a8a8" stroke-width="1.8" fill="none"/></svg>
<div style="left:1639px;top:64px;width:63px;height:44px;background:#e9e9e9;"></div>
<div style="left:1639px;top:64px;width:1.5px;height:46px;background:#bebebe;"></div>
<div style="left:1639px;top:108px;width:63px;height:2px;background:#bebebe;"></div>
<svg style="left:1648px;top:84.5px;" width="10" height="6" viewBox="0 0 10 6"><path d="M0,0 H10 L5.0,6 Z" fill="#555"/></svg>
<svg style="left:1662px;top:78px;" width="17" height="16" viewBox="0 0 17 16"><rect x="0" y="0.5" width="17" height="1.7" fill="#555"/><rect x="0" y="4.7" width="17" height="1.7" fill="#555"/><rect x="0" y="8.9" width="17" height="1.7" fill="#555"/><rect x="0" y="13.1" width="17" height="1.7" fill="#555"/></svg>
<span style="left:1682.31px;top:77.06px;line-height:23px;height:23px;font-size:18px;color:#333;letter-spacing:0.000px;font-family:'Liberation Sans',sans-serif;">3</span>
<div style="left:660px;top:568px;width:1042px;height:30px;background:#fffae3;"></div>
<div style="left:794.5px;top:568px;width:1.5px;height:30px;background:#c6c6c6;"></div>
<div style="left:1366.0px;top:478px;width:140.0px;height:30px;background:#ffddfc;"></div>
<div style="left:918.0px;top:508px;width:140.0px;height:30px;background:#dedcfb;"></div>
<div style="left:918.0px;top:538px;width:140.0px;height:30px;background:#dedcfb;"></div>
<div style="left:1016.0px;top:568px;width:140.0px;height:30px;background:#dedcfb;"></div>
<div style="left:866.5px;top:478px;width:1.2px;height:149px;background:#dcdcdc;"></div>
<span class="code" style="left:806.0px;top:119.19px;width:896.0px;"><b style="color:#000080">package</b> com.pdai.demospringbootstarter;</span>
<span class="code" style="left:806.0px;top:179.19px;width:896.0px;"><b style="color:#000080">import</b> org.springframework.boot.context.properties.<span class="i" style="color:#808000">EnableConfigurationProperties</span>;</span>
<span class="code" style="left:806.0px;top:209.19px;width:896.0px;"><b style="color:#000080">import</b> org.springframework.context.annotation.<span class="i" style="color:#808000">Bean</span>;</span>
<span class="code" style="left:806.0px;top:239.19px;width:896.0px;"><b style="color:#000080">import</b> org.springframework.context.annotation.<span class="i" style="color:#808000">Configuration</span>;</span>
<span class="code" style="left:806.0px;top:299.19px;width:896.0px;"><span class="i" style="color:#808000">@Configuration</span></span>
<span class="code" style="left:806.0px;top:329.19px;width:896.0px;"><span class="i" style="color:#808000">@EnableConfigurationProperties</span>(DemoProperties.<b style="color:#000080">class</b>)</span>
<span class="code" style="left:806.0px;top:359.19px;width:896.0px;"><b style="color:#000080">public class</b> DemoAutoConfiguration {</span>
<span class="code" style="left:806.0px;top:419.19px;width:896.0px;">    <span class="i" style="color:#808000">@Bean</span></span>
<span class="code" style="left:806.0px;top:449.19px;width:896.0px;">    <b style="color:#000080">public</b> com.pdai.demo.module.DemoModule demoModule(DemoProperties properties){</span>
<span class="code" style="left:806.0px;top:479.19px;width:896.0px;">        com.pdai.demo.module.DemoModule demoModule = <b style="color:#000080">new</b> com.pdai.demo.module.DemoModule();</span>
<span class="code" style="left:806.0px;top:509.19px;width:896.0px;">        demoModule.setName(properties.getName());</span>
<span class="code" style="left:806.0px;top:539.19px;width:896.0px;">        demoModule.setVersion(properties.getVersion());</span>
<span class="code" style="left:806.0px;top:569.19px;width:896.0px;">        <b style="color:#000080">return</b> demoModule;</span>
<span class="code" style="left:806.0px;top:629.19px;width:896.0px;">    }</span>
<span class="code" style="left:806.0px;top:659.19px;width:896.0px;">}</span>
<span class="ln" style="left:640px;top:119.54px;width:57.2px;">1</span>
<span class="ln" style="left:640px;top:149.54px;width:57.2px;">2</span>
<span class="ln" style="left:640px;top:179.54px;width:57.2px;">3</span>
<span class="ln" style="left:640px;top:209.54px;width:57.2px;">4</span>
<span class="ln" style="left:640px;top:239.54px;width:57.2px;">5</span>
<span class="ln" style="left:640px;top:269.54px;width:57.2px;">6</span>
<span class="ln" style="left:640px;top:299.54px;width:57.2px;">7</span>
<span class="ln" style="left:640px;top:329.54px;width:57.2px;">8</span>
<span class="ln" style="left:640px;top:359.54px;width:57.2px;">9</span>
<span class="ln" style="left:640px;top:389.54px;width:57.2px;">10</span>
<span class="ln" style="left:640px;top:419.54px;width:57.2px;">11</span>
<span class="ln" style="left:640px;top:449.54px;width:57.2px;">12</span>
<span class="ln" style="left:640px;top:479.54px;width:57.2px;">13</span>
<span class="ln" style="left:640px;top:509.54px;width:57.2px;">14</span>
<span class="ln" style="left:640px;top:539.54px;width:57.2px;">15</span>
<span class="ln" style="left:640px;top:569.54px;width:57.2px;">16</span>
<span class="ln" style="left:640px;top:599.54px;width:57.2px;">17</span>
<span class="ln" style="left:640px;top:629.54px;width:57.2px;">18</span>
<span class="ln" style="left:640px;top:659.54px;width:57.2px;">19</span>
<span class="ln" style="left:640px;top:689.54px;width:57.2px;">20</span>
<svg style="left:787.3px;top:187.5px;" width="16" height="19" viewBox="0 0 16 19"><path d="M0.75,0.75 H14.75 V10 L7.75,17.5 L0.75,10 Z" fill="#fff" stroke="#c0c0c0" stroke-width="1.5"/><path d="M4,6.5 H11.5" stroke="#b0b0b0" stroke-width="1.5"/></svg>
<svg style="left:787.3px;top:245.5px;" width="16" height="19" viewBox="0 0 16 19"><path d="M0.75,17.25 H14.75 V8 L7.75,0.5 L0.75,8 Z" fill="#fff" stroke="#c0c0c0" stroke-width="1.5"/><path d="M4,11.5 H11.5" stroke="#b0b0b0" stroke-width="1.5"/></svg>
<svg style="left:787.3px;top:307.5px;" width="16" height="19" viewBox="0 0 16 19"><path d="M0.75,0.75 H14.75 V10 L7.75,17.5 L0.75,10 Z" fill="#fff" stroke="#c0c0c0" stroke-width="1.5"/><path d="M4,6.5 H11.5" stroke="#b0b0b0" stroke-width="1.5"/></svg>
<svg style="left:787.3px;top:335.5px;" width="16" height="19" viewBox="0 0 16 19"><path d="M0.75,17.25 H14.75 V8 L7.75,0.5 L0.75,8 Z" fill="#fff" stroke="#c0c0c0" stroke-width="1.5"/><path d="M4,11.5 H11.5" stroke="#b0b0b0" stroke-width="1.5"/></svg>
<svg style="left:787.3px;top:457.5px;" width="16" height="19" viewBox="0 0 16 19"><path d="M0.75,0.75 H14.75 V10 L7.75,17.5 L0.75,10 Z" fill="#fff" stroke="#c0c0c0" stroke-width="1.5"/><path d="M4,6.5 H11.5" stroke="#b0b0b0" stroke-width="1.5"/></svg>
<svg style="left:787.3px;top:635.5px;" width="16" height="19" viewBox="0 0 16 19"><path d="M0.75,17.25 H14.75 V8 L7.75,0.5 L0.75,8 Z" fill="#fff" stroke="#c0c0c0" stroke-width="1.5"/><path d="M4,11.5 H11.5" stroke="#b0b0b0" stroke-width="1.5"/></svg>
<svg style="left:714px;top:362px;overflow:visible;" width="25" height="26" viewBox="0 0 25 26"><circle cx="10" cy="10" r="10" fill="#6cbf5c"/><path d="M2,3 L18,18" stroke="#ececec" stroke-width="2"/><circle cx="15.5" cy="15" r="7" fill="#6fc1e8" stroke="#ececec" stroke-width="1"/><path d="M17.38,13.13 A2.8,2.8 0 1 0 17.38,16.87" fill="none" stroke="#333" stroke-width="1.5"/></svg>
<svg style="left:742px;top:360px;" width="26" height="26" viewBox="0 0 26 26"><rect x="0" y="0" width="7" height="7" fill="#9aa7b0"/><rect x="18" y="0" width="7" height="7" fill="#9aa7b0"/><rect x="0" y="17" width="7" height="7" fill="#9aa7b0"/><path d="M9,3 H16 M3.5,9 V15" stroke="#666" stroke-width="1.6" stroke-dasharray="2,2"/><ellipse cx="19" cy="19" rx="6.5" ry="5.5" fill="#6cbf5c" transform="rotate(-35 19 19)"/></svg>
<svg style="left:714px;top:422px;overflow:visible;" width="25" height="26" viewBox="0 0 25 26"><circle cx="10" cy="10" r="10" fill="#6cbf5c"/><path d="M2,3 L18,18" stroke="#ececec" stroke-width="2"/><path d="M22.5,13.8 H15.5 V9.5 L7.5,16 L15.5,22.5 V18.2 H22.5 Z" fill="#808080" stroke="#ececec" stroke-width="1"/></svg>
<svg style="left:714px;top:452px;overflow:visible;" width="25" height="26" viewBox="0 0 25 26"><circle cx="10" cy="10" r="10" fill="#6cbf5c"/><path d="M2,3 L18,18" stroke="#ececec" stroke-width="2"/><path d="M8,13.8 H14.5 V9.5 L22.5,16 L14.5,22.5 V18.2 H8 Z" fill="#808080" stroke="#ececec" stroke-width="1"/></svg>
<svg style="left:1677px;top:123px;" width="22" height="18" viewBox="0 0 22 18"><path d="M1.5,8.5 L8,15 L20.5,1.5" fill="none" stroke="#3fa33f" stroke-width="3.6"/></svg>
<div style="left:1674px;top:510px;width:28px;height:4px;background:#a98df1;"></div>
<div style="left:1674px;top:540px;width:28px;height:4px;background:#a98df1;"></div>
<div style="left:1674px;top:570px;width:28px;height:4px;background:#a98df1;"></div>
<div style="left:1674px;top:600px;width:28px;height:4px;background:#a98df1;"></div>
<span style="left:812.75px;top:997.83px;line-height:32px;height:32px;font-size:25px;color:#3c3c3c;letter-spacing:0.388px;font-family:'Liberation Sans',sans-serif;">DemoAutoConfiguration</span>
<svg style="left:1108px;top:1010px;" width="8" height="14" viewBox="0 0 8 14"><path d="M1,1 L6.5,7 L1,13" fill="none" stroke="#888" stroke-width="1.6"/></svg>
<span style="left:1133.95px;top:997.83px;line-height:32px;height:32px;font-size:25px;color:#3c3c3c;letter-spacing:0.111px;font-family:'Liberation Sans',sans-serif;">demoModule()</span>
<span style="left:1716.91px;top:72.96px;line-height:33px;height:33px;font-size:25.5px;color:#000;letter-spacing:0.175px;font-family:'Liberation Sans',sans-serif;">Maven Projects</span>
<svg style="left:2424px;top:76px;" width="24" height="24" viewBox="0 0 24 24"><circle cx="12.0" cy="12.0" r="8.40" fill="#6e6e6e"/><rect x="9.60" y="0.00" width="4.80" height="24.00" fill="#6e6e6e" transform="rotate(0 12.0 12.0)"/><rect x="9.60" y="0.00" width="4.80" height="24.00" fill="#6e6e6e" transform="rotate(45 12.0 12.0)"/><rect x="9.60" y="0.00" width="4.80" height="24.00" fill="#6e6e6e" transform="rotate(90 12.0 12.0)"/><rect x="9.60" y="0.00" width="4.80" height="24.00" fill="#6e6e6e" transform="rotate(135 12.0 12.0)"/><circle cx="12.0" cy="12.0" r="3.60" fill="#ececec"/></svg>
<svg style="left:2452px;top:86px;" width="10" height="6" viewBox="0 0 10 6"><path d="M0,0 H10 L5.0,6 Z" fill="#6e6e6e"/></svg>
<svg style="left:2480px;top:77.4px;" width="25" height="22" viewBox="0 0 25 22"><rect x="18.6" y="0" width="6" height="21.6" fill="#6e6e6e"/><rect x="20.3" y="11.5" width="2.6" height="8.4" fill="#ececec"/><path d="M0.5,6.6 H11" stroke="#6e6e6e" stroke-width="2"/><path d="M15.5,6.6 L9.5,1.8 V11.4 Z" fill="#6e6e6e"/></svg>
<svg style="left:1719.8px;top:129px;" width="29" height="29.5" viewBox="0 0 29 29.5"><path d="M13,2.6 A11.6,11.6 0 0 0 6.2,22.8" fill="none" stroke="#3478d0" stroke-width="4.8"/><path d="M16,26.4 A11.6,11.6 0 0 0 22.8,6.2" fill="none" stroke="#3478d0" stroke-width="4.8"/><path d="M12.5,0 H28.2 L22.8,9.8 Z" fill="#3478d0"/><path d="M16.5,29.2 H0.8 L6.2,19.4 Z" fill="#3478d0"/></svg>
<svg style="left:1770px;top:131.8px;" width="32" height="30" viewBox="0 0 32 30"><path d="M0,0 H11 L14,5 H28 V21.5 H0 Z" fill="#9aa7b0"/><circle cx="22" cy="19.5" r="9.8" fill="#ececec"/><path d="M16.2,21 A6.2,6.2 0 1 0 20,14.2" fill="none" stroke="#3fa9e0" stroke-width="2.7"/><path d="M14.5,10.5 L22.5,12.2 L17.5,18.5 Z" fill="#3fa9e0"/></svg>
<svg style="left:1819.5px;top:128px;" width="33" height="33" viewBox="0 0 33 33"><path d="M11.3,0 H17.7 V9 H24.5 L14.5,18.3 L4.5,9 H11.3 Z" fill="#3b86d6"/><path d="M0.5,21.2 H28.5 M0.5,25.2 H28.5 M0.5,29.3 H24" stroke="#5a5a5a" stroke-width="2"/><path d="M23.5,26 H33 L28.2,31 Z" fill="#3a3a3a"/></svg>
<svg style="left:1866px;top:123px;" width="2" height="45" viewBox="0 0 2 45"><rect x="0" y="0" width="2" height="2" fill="#7a7a7a"/><rect x="0" y="6" width="2" height="2" fill="#7a7a7a"/><rect x="0" y="12" width="2" height="2" fill="#7a7a7a"/><rect x="0" y="18" width="2" height="2" fill="#7a7a7a"/><rect x="0" y="24" width="2" height="2" fill="#7a7a7a"/><rect x="0" y="30" width="2" height="2" fill="#7a7a7a"/><rect x="0" y="36" width="2" height="2" fill="#7a7a7a"/><rect x="0" y="42" width="2" height="2" fill="#7a7a7a"/></svg>
<svg style="left:1884px;top:132px;" width="24" height="24" viewBox="0 0 24 24"><path d="M12,0 V24 M0,12 H24" stroke="#3fa33f" stroke-width="4.2"/></svg>
<svg style="left:1928px;top:123px;" width="2" height="45" viewBox="0 0 2 45"><rect x="0" y="0" width="2" height="2" fill="#7a7a7a"/><rect x="0" y="6" width="2" height="2" fill="#7a7a7a"/><rect x="0" y="12" width="2" height="2" fill="#7a7a7a"/><rect x="0" y="18" width="2" height="2" fill="#7a7a7a"/><rect x="0" y="24" width="2" height="2" fill="#7a7a7a"/><rect x="0" y="30" width="2" height="2" fill="#7a7a7a"/><rect x="0" y="36" width="2" height="2" fill="#7a7a7a"/><rect x="0" y="42" width="2" height="2" fill="#7a7a7a"/></svg>
<svg style="left:1947px;top:130px;" width="23" height="28" viewBox="0 0 23 28"><path d="M0,0 L23,14.0 L0,28 Z" fill="#35a535"/></svg>
<svg style="left:1994px;top:131px;overflow:visible;" width="30" height="30" viewBox="0 0 30 30"><path d="M0,0 H28 V17 H10 L0,24 Z" fill="#9aa7b0"/><rect x="4" y="4.5" width="20" height="2.5" fill="#ececec"/><rect x="4" y="10" width="20" height="2.5" fill="#ececec"/><text x="13" y="30" font-family="Liberation Sans,sans-serif" font-style="italic" font-weight="bold" font-size="22" fill="#3ba7dc">m</text></svg>
<svg style="left:2043px;top:129px;" width="30" height="30" viewBox="0 0 30 30"><rect x="0" y="9" width="29" height="10" fill="#3b9ede"/><path d="M9,29 L16,0 M16,29 L23,0" stroke="#ececec" stroke-width="5.5"/><path d="M9,29 L16,0 M16,29 L23,0" stroke="#5a5a5a" stroke-width="2.2"/></svg>
<svg style="left:2094px;top:130px;" width="29" height="29" viewBox="0 0 29 29"><circle cx="14.5" cy="14.5" r="14.5" fill="#6fc1e8"/><path d="M18,3 L7,16 H14 L11,26 L22,12 H15 Z" fill="#3a3a3a"/></svg>
<svg style="left:2144px;top:130px;" width="29" height="29" viewBox="0 0 29 29"><circle cx="14.5" cy="5" r="5" fill="#6e6e6e"/><path d="M14.5,9 V16 M4.5,21 V16 H24.5 V21" fill="none" stroke="#6e6e6e" stroke-width="1.8"/><rect x="0" y="20" width="9" height="9" fill="#6e6e6e"/><rect x="10" y="20" width="9" height="9" fill="#6e6e6e"/><rect x="20" y="20" width="9" height="9" fill="#6e6e6e"/></svg>
<svg style="left:2195px;top:130px;" width="26" height="29" viewBox="0 0 26 29"><path d="M0,11.5 H26 M0,17.5 H26" stroke="#555" stroke-width="1.8"/><path d="M6,0 H20 L13,8.5 Z M6,29 H20 L13,20.5 Z" fill="#3b86d6"/></svg>
<svg style="left:2241px;top:123px;" width="2" height="45" viewBox="0 0 2 45"><rect x="0" y="0" width="2" height="2" fill="#7a7a7a"/><rect x="0" y="6" width="2" height="2" fill="#7a7a7a"/><rect x="0" y="12" width="2" height="2" fill="#7a7a7a"/><rect x="0" y="18" width="2" height="2" fill="#7a7a7a"/><rect x="0" y="24" width="2" height="2" fill="#7a7a7a"/><rect x="0" y="30" width="2" height="2" fill="#7a7a7a"/><rect x="0" y="36" width="2" height="2" fill="#7a7a7a"/><rect x="0" y="42" width="2" height="2" fill="#7a7a7a"/></svg>
<svg style="left:2254px;top:130px;overflow:visible;" width="34" height="32" viewBox="0 0 34 32"><rect x="1.5" y="1.5" width="19" height="21" fill="#f4f4f4" stroke="#76787c" stroke-width="3"/><polygon points="11,6 16,9 16,15 11,18 6,15 6,9" fill="#f0973a"/><circle cx="11" cy="12" r="2.6" fill="#fff"/><path d="M12,30 L24,17" stroke="#76787c" stroke-width="5"/><circle cx="26.5" cy="14.5" r="5" fill="none" stroke="#76787c" stroke-width="3.4" stroke-dasharray="22 10" transform="rotate(-10 26.5 14.5)"/><circle cx="11.5" cy="30" r="3.4" fill="#76787c"/></svg>
<div style="left:1704px;top:498px;width:814px;height:40px;background:#c9c9c9;"></div>
<svg style="left:1711px;top:192.3px;" width="19" height="16" viewBox="0 0 19 16"><path d="M0,0 H19 L9.5,16 Z" fill="#9a9a9a"/></svg>
<svg style="left:1752.5px;top:183.3px;overflow:visible;" width="30" height="31" viewBox="0 0 30 31"><path d="M9,0 H20 V22 H0 V9 Z" fill="#9aa7b0"/><path d="M7.5,0 V7.5 H0 Z" fill="#9aa7b0" opacity="0.6"/><rect x="3" y="14" width="24" height="16" fill="#fff"/><text x="4" y="28" font-family="Liberation Sans,sans-serif" font-style="italic" font-weight="bold" font-size="22" fill="#3ba7dc">m</text></svg>
<span style="left:1781.67px;top:182.24px;line-height:35px;height:35px;font-size:27px;color:#000;letter-spacing:1.007px;font-family:'Liberation Sans',sans-serif;width:736.33px;overflow:hidden;">demo-springboot-starter</span>
<svg style="left:1747px;top:232.3px;" width="19" height="16" viewBox="0 0 19 16"><path d="M0,0 H19 L9.5,16 Z" fill="#9a9a9a"/></svg>
<svg style="left:1782px;top:225.3px;" width="32" height="31" viewBox="0 0 32 31"><path d="M0,0 H11 L14,5 H28 V21.5 H0 Z" fill="#9aa7b0"/><circle cx="22" cy="21" r="10" fill="#fff"/><circle cx="22" cy="21" r="5.86" fill="#40a6db"/><rect x="20.24" y="12.50" width="3.53" height="17.00" fill="#40a6db" transform="rotate(0 22 21)"/><rect x="20.24" y="12.50" width="3.53" height="17.00" fill="#40a6db" transform="rotate(45 22 21)"/><rect x="20.24" y="12.50" width="3.53" height="17.00" fill="#40a6db" transform="rotate(90 22 21)"/><rect x="20.24" y="12.50" width="3.53" height="17.00" fill="#40a6db" transform="rotate(135 22 21)"/><circle cx="22" cy="21" r="2.51" fill="#fff"/></svg>
<span style="left:1816.59px;top:222.24px;line-height:35px;height:35px;font-size:27px;color:#000;letter-spacing:0.383px;font-family:'Liberation Sans',sans-serif;width:701.41px;overflow:hidden;">Lifecycle</span>
<svg style="left:1818px;top:263.8px;" width="28" height="28" viewBox="0 0 28 28"><circle cx="14.0" cy="14.0" r="9.66" fill="#41a9dc"/><rect x="11.10" y="0.00" width="5.81" height="28.00" fill="#41a9dc" transform="rotate(0 14.0 14.0)"/><rect x="11.10" y="0.00" width="5.81" height="28.00" fill="#41a9dc" transform="rotate(45 14.0 14.0)"/><rect x="11.10" y="0.00" width="5.81" height="28.00" fill="#41a9dc" transform="rotate(90 14.0 14.0)"/><rect x="11.10" y="0.00" width="5.81" height="28.00" fill="#41a9dc" transform="rotate(135 14.0 14.0)"/><circle cx="14.0" cy="14.0" r="4.13" fill="#fff"/></svg>
<span style="left:1853.65px;top:262.24px;line-height:35px;height:35px;font-size:27px;color:#000;letter-spacing:-0.012px;font-family:'Liberation Sans',sans-serif;width:664.35px;overflow:hidden;">clean</span>
<svg style="left:1818px;top:303.8px;" width="28" height="28" viewBox="0 0 28 28"><circle cx="14.0" cy="14.0" r="9.66" fill="#41a9dc"/><rect x="11.10" y="0.00" width="5.81" height="28.00" fill="#41a9dc" transform="rotate(0 14.0 14.0)"/><rect x="11.10" y="0.00" width="5.81" height="28.00" fill="#41a9dc" transform="rotate(45 14.0 14.0)"/><rect x="11.10" y="0.00" width="5.81" height="28.00" fill="#41a9dc" transform="rotate(90 14.0 14.0)"/><rect x="11.10" y="0.00" width="5.81" height="28.00" fill="#41a9dc" transform="rotate(135 14.0 14.0)"/><circle cx="14.0" cy="14.0" r="4.13" fill="#fff"/></svg>
<span style="left:1854.71px;top:302.24px;line-height:35px;height:35px;font-size:27px;color:#000;letter-spacing:0.204px;font-family:'Liberation Sans',sans-serif;width:663.29px;overflow:hidden;">validate</span>
<svg style="left:1818px;top:343.8px;" width="28" height="28" viewBox="0 0 28 28"><circle cx="14.0" cy="14.0" r="9.66" fill="#41a9dc"/><rect x="11.10" y="0.00" width="5.81" height="28.00" fill="#41a9dc" transform="rotate(0 14.0 14.0)"/><rect x="11.10" y="0.00" width="5.81" height="28.00" fill="#41a9dc" transform="rotate(45 14.0 14.0)"/><rect x="11.10" y="0.00" width="5.81" height="28.00" fill="#41a9dc" transform="rotate(90 14.0 14.0)"/><rect x="11.10" y="0.00" width="5.81" height="28.00" fill="#41a9dc" transform="rotate(135 14.0 14.0)"/><circle cx="14.0" cy="14.0" r="4.13" fill="#fff"/></svg>
<span style="left:1853.65px;top:342.24px;line-height:35px;height:35px;font-size:27px;color:#000;letter-spacing:0.418px;font-family:'Liberation Sans',sans-serif;width:664.35px;overflow:hidden;">compile</span>
<svg style="left:1818px;top:383.8px;" width="28" height="28" viewBox="0 0 28 28"><circle cx="14.0" cy="14.0" r="9.66" fill="#41a9dc"/><rect x="11.10" y="0.00" width="5.81" height="28.00" fill="#41a9dc" transform="rotate(0 14.0 14.0)"/><rect x="11.10" y="0.00" width="5.81" height="28.00" fill="#41a9dc" transform="rotate(45 14.0 14.0)"/><rect x="11.10" y="0.00" width="5.81" height="28.00" fill="#41a9dc" transform="rotate(90 14.0 14.0)"/><rect x="11.10" y="0.00" width="5.81" height="28.00" fill="#41a9dc" transform="rotate(135 14.0 14.0)"/><circle cx="14.0" cy="14.0" r="4.13" fill="#fff"/></svg>
<span style="left:1854.39px;top:382.24px;line-height:35px;height:35px;font-size:27px;color:#000;letter-spacing:0.929px;font-family:'Liberation Sans',sans-serif;width:663.61px;overflow:hidden;">test</span>
<svg style="left:1818px;top:423.8px;" width="28" height="28" viewBox="0 0 28 28"><circle cx="14.0" cy="14.0" r="9.66" fill="#41a9dc"/><rect x="11.10" y="0.00" width="5.81" height="28.00" fill="#41a9dc" transform="rotate(0 14.0 14.0)"/><rect x="11.10" y="0.00" width="5.81" height="28.00" fill="#41a9dc" transform="rotate(45 14.0 14.0)"/><rect x="11.10" y="0.00" width="5.81" height="28.00" fill="#41a9dc" transform="rotate(90 14.0 14.0)"/><rect x="11.10" y="0.00" width="5.81" height="28.00" fill="#41a9dc" transform="rotate(135 14.0 14.0)"/><circle cx="14.0" cy="14.0" r="4.13" fill="#fff"/></svg>
<span style="left:1853.06px;top:422.24px;line-height:35px;height:35px;font-size:27px;color:#000;letter-spacing:0.377px;font-family:'Liberation Sans',sans-serif;width:664.94px;overflow:hidden;">package</span>
<svg style="left:1818px;top:463.8px;" width="28" height="28" viewBox="0 0 28 28"><circle cx="14.0" cy="14.0" r="9.66" fill="#41a9dc"/><rect x="11.10" y="0.00" width="5.81" height="28.00" fill="#41a9dc" transform="rotate(0 14.0 14.0)"/><rect x="11.10" y="0.00" width="5.81" height="28.00" fill="#41a9dc" transform="rotate(45 14.0 14.0)"/><rect x="11.10" y="0.00" width="5.81" height="28.00" fill="#41a9dc" transform="rotate(90 14.0 14.0)"/><rect x="11.10" y="0.00" width="5.81" height="28.00" fill="#41a9dc" transform="rotate(135 14.0 14.0)"/><circle cx="14.0" cy="14.0" r="4.13" fill="#fff"/></svg>
<span style="left:1854.71px;top:462.24px;line-height:35px;height:35px;font-size:27px;color:#000;letter-spacing:0.700px;font-family:'Liberation Sans',sans-serif;width:663.29px;overflow:hidden;">verify</span>
<svg style="left:1818px;top:503.8px;" width="28" height="28" viewBox="0 0 28 28"><circle cx="14.0" cy="14.0" r="9.66" fill="#41a9dc"/><rect x="11.10" y="0.00" width="5.81" height="28.00" fill="#41a9dc" transform="rotate(0 14.0 14.0)"/><rect x="11.10" y="0.00" width="5.81" height="28.00" fill="#41a9dc" transform="rotate(45 14.0 14.0)"/><rect x="11.10" y="0.00" width="5.81" height="28.00" fill="#41a9dc" transform="rotate(90 14.0 14.0)"/><rect x="11.10" y="0.00" width="5.81" height="28.00" fill="#41a9dc" transform="rotate(135 14.0 14.0)"/><circle cx="14.0" cy="14.0" r="4.13" fill="#c9c9c9"/></svg>
<span style="left:1852.99px;top:502.24px;line-height:35px;height:35px;font-size:27px;color:#000;letter-spacing:0.964px;font-family:'Liberation Sans',sans-serif;width:665.01px;overflow:hidden;">install</span>
<svg style="left:1818px;top:543.8px;" width="28" height="28" viewBox="0 0 28 28"><circle cx="14.0" cy="14.0" r="9.66" fill="#41a9dc"/><rect x="11.10" y="0.00" width="5.81" height="28.00" fill="#41a9dc" transform="rotate(0 14.0 14.0)"/><rect x="11.10" y="0.00" width="5.81" height="28.00" fill="#41a9dc" transform="rotate(45 14.0 14.0)"/><rect x="11.10" y="0.00" width="5.81" height="28.00" fill="#41a9dc" transform="rotate(90 14.0 14.0)"/><rect x="11.10" y="0.00" width="5.81" height="28.00" fill="#41a9dc" transform="rotate(135 14.0 14.0)"/><circle cx="14.0" cy="14.0" r="4.13" fill="#fff"/></svg>
<span style="left:1854.05px;top:542.24px;line-height:35px;height:35px;font-size:27px;color:#000;letter-spacing:1.045px;font-family:'Liberation Sans',sans-serif;width:663.95px;overflow:hidden;">site</span>
<svg style="left:1818px;top:583.8px;" width="28" height="28" viewBox="0 0 28 28"><circle cx="14.0" cy="14.0" r="9.66" fill="#41a9dc"/><rect x="11.10" y="0.00" width="5.81" height="28.00" fill="#41a9dc" transform="rotate(0 14.0 14.0)"/><rect x="11.10" y="0.00" width="5.81" height="28.00" fill="#41a9dc" transform="rotate(45 14.0 14.0)"/><rect x="11.10" y="0.00" width="5.81" height="28.00" fill="#41a9dc" transform="rotate(90 14.0 14.0)"/><rect x="11.10" y="0.00" width="5.81" height="28.00" fill="#41a9dc" transform="rotate(135 14.0 14.0)"/><circle cx="14.0" cy="14.0" r="4.13" fill="#fff"/></svg>
<span style="left:1853.67px;top:582.24px;line-height:35px;height:35px;font-size:27px;color:#000;letter-spacing:0.565px;font-family:'Liberation Sans',sans-serif;width:664.33px;overflow:hidden;">deploy</span>
<svg style="left:1748.5px;top:629.8px;" width="16" height="19" viewBox="0 0 16 19"><path d="M0,0 V19 L16,9.5 Z" fill="#9a9a9a"/></svg>
<svg style="left:1782px;top:625.3px;" width="32" height="31" viewBox="0 0 32 31"><path d="M0,0 H11 L14,5 H28 V21.5 H0 Z" fill="#9aa7b0"/><circle cx="22" cy="21" r="10" fill="#fff"/><circle cx="22" cy="21" r="5.86" fill="#40a6db"/><rect x="20.24" y="12.50" width="3.53" height="17.00" fill="#40a6db" transform="rotate(0 22 21)"/><rect x="20.24" y="12.50" width="3.53" height="17.00" fill="#40a6db" transform="rotate(45 22 21)"/><rect x="20.24" y="12.50" width="3.53" height="17.00" fill="#40a6db" transform="rotate(90 22 21)"/><rect x="20.24" y="12.50" width="3.53" height="17.00" fill="#40a6db" transform="rotate(135 22 21)"/><circle cx="22" cy="21" r="2.51" fill="#fff"/></svg>
<span style="left:1816.59px;top:622.24px;line-height:35px;height:35px;font-size:27px;color:#000;letter-spacing:0.473px;font-family:'Liberation Sans',sans-serif;width:701.41px;overflow:hidden;">Plugins</span>
<svg style="left:1747px;top:672.3px;" width="19" height="16" viewBox="0 0 19 16"><path d="M0,0 H19 L9.5,16 Z" fill="#9a9a9a"/></svg>
<svg style="left:1782px;top:665.3px;" width="32" height="31" viewBox="0 0 32 31"><path d="M0,0 H11 L14,5 H28 V21.5 H0 Z" fill="#9aa7b0"/><rect x="11" y="10" width="20" height="20" fill="#fff"/><rect x="13" y="16" width="2.4" height="14" fill="#8a9097"/><rect x="17" y="13" width="2.4" height="17" fill="#3fa33f"/><rect x="21" y="12" width="2.4" height="18" fill="#8a9097"/><rect x="25" y="14" width="2.4" height="16" fill="#3da4dc"/><rect x="29" y="17" width="2.4" height="13" fill="#8a9097"/></svg>
<span style="left:1816.59px;top:662.24px;line-height:35px;height:35px;font-size:27px;color:#000;letter-spacing:0.069px;font-family:'Liberation Sans',sans-serif;width:701.41px;overflow:hidden;">Dependencies</span>
<svg style="left:1784.5px;top:869.8px;" width="16" height="19" viewBox="0 0 16 19"><path d="M0,0 V19 L16,9.5 Z" fill="#9a9a9a"/></svg>
<svg style="left:1818px;top:865.3px;" width="28" height="24" viewBox="0 0 28 24"><rect x="0" y="5" width="4" height="19" fill="#8a9097"/><rect x="6" y="3" width="4" height="21" fill="#3fa33f"/><rect x="12" y="0" width="4" height="24" fill="#8a9097"/><rect x="18" y="3" width="4" height="21" fill="#3da4dc"/><rect x="24" y="6" width="4" height="18" fill="#8a9097"/></svg>
<span style="left:1853.67px;top:862.24px;line-height:35px;height:35px;font-size:27px;color:#000;letter-spacing:0.932px;font-family:'Liberation Sans',sans-serif;width:664.33px;overflow:hidden;">org.springframework.boot:spring-boot-starter-test:2.1.7.RELEASE (test)</span>
<svg style="left:1784.5px;top:709.8px;" width="16" height="19" viewBox="0 0 16 19"><path d="M0,0 V19 L16,9.5 Z" fill="#9a9a9a"/></svg>
<svg style="left:1818px;top:705.3px;" width="28" height="24" viewBox="0 0 28 24"><rect x="0" y="5" width="4" height="19" fill="#8a9097"/><rect x="6" y="3" width="4" height="21" fill="#3fa33f"/><rect x="12" y="0" width="4" height="24" fill="#8a9097"/><rect x="18" y="3" width="4" height="21" fill="#3da4dc"/><rect x="24" y="6" width="4" height="18" fill="#8a9097"/></svg>
<span style="left:1853.67px;top:702.24px;line-height:35px;height:35px;font-size:27px;color:#000;letter-spacing:0.712px;font-family:'Liberation Sans',sans-serif;width:664.33px;overflow:hidden;">org.springframework.boot:spring-boot-starter:2.1.7.RELEASE</span>
<svg style="left:1784.5px;top:749.8px;" width="16" height="19" viewBox="0 0 16 19"><path d="M0,0 V19 L16,9.5 Z" fill="#9a9a9a"/></svg>
<svg style="left:1818px;top:745.3px;" width="28" height="24" viewBox="0 0 28 24"><rect x="0" y="5" width="4" height="19" fill="#8a9097"/><rect x="6" y="3" width="4" height="21" fill="#3fa33f"/><rect x="12" y="0" width="4" height="24" fill="#8a9097"/><rect x="18" y="3" width="4" height="21" fill="#3da4dc"/><rect x="24" y="6" width="4" height="18" fill="#8a9097"/></svg>
<span style="left:1853.67px;top:742.24px;line-height:35px;height:35px;font-size:27px;color:#000;letter-spacing:0.882px;font-family:'Liberation Sans',sans-serif;width:664.33px;overflow:hidden;">org.springframework.boot:spring-boot-autoconfigure:2.1.7.RELEASE</span>
<svg style="left:1818px;top:785.3px;" width="28" height="24" viewBox="0 0 28 24"><rect x="0" y="5" width="4" height="19" fill="#8a9097"/><rect x="6" y="3" width="4" height="21" fill="#3fa33f"/><rect x="12" y="0" width="4" height="24" fill="#8a9097"/><rect x="18" y="3" width="4" height="21" fill="#3da4dc"/><rect x="24" y="6" width="4" height="18" fill="#8a9097"/></svg>
<span style="left:1853.67px;top:782.24px;line-height:35px;height:35px;font-size:27px;color:#000;letter-spacing:0.855px;font-family:'Liberation Sans',sans-serif;width:664.33px;overflow:hidden;">org.springframework.boot:spring-boot-configuration-processor:2.1.7.RELEASE</span>
<svg style="left:1818px;top:825.3px;" width="28" height="24" viewBox="0 0 28 24"><rect x="0" y="5" width="4" height="19" fill="#8a9097"/><rect x="6" y="3" width="4" height="21" fill="#3fa33f"/><rect x="12" y="0" width="4" height="24" fill="#8a9097"/><rect x="18" y="3" width="4" height="21" fill="#3da4dc"/><rect x="24" y="6" width="4" height="18" fill="#8a9097"/></svg>
<span style="left:1853.65px;top:822.24px;line-height:35px;height:35px;font-size:27px;color:#000;letter-spacing:0.048px;font-family:'Liberation Sans',sans-serif;width:664.35px;overflow:hidden;">com.pdai:demo:0.0.1-SNAPSHOT</span>
<svg style="left:2525.5px;top:82px;" width="27" height="28" viewBox="0 0 27 28"><ellipse cx="13.5" cy="21.5" rx="13" ry="4.6" fill="#45aadf" stroke="#e8e8e8" stroke-width="1.2"/><ellipse cx="13.5" cy="16.0" rx="13" ry="4.6" fill="#45aadf" stroke="#e8e8e8" stroke-width="1.2"/><ellipse cx="13.5" cy="10.5" rx="13" ry="4.6" fill="#45aadf" stroke="#e8e8e8" stroke-width="1.2"/><ellipse cx="13.5" cy="5.0" rx="13" ry="4.6" fill="#45aadf" stroke="#e8e8e8" stroke-width="1.2"/></svg>
<span style="left:2554.20px;top:117.15px;line-height:30px;height:30px;font-size:22.5px;color:#1a1a1a;letter-spacing:0.475px;font-family:'Liberation Sans',sans-serif;transform-origin:0 0;transform:rotate(90deg);">Database</span>
<svg style="left:2526px;top:262px;overflow:visible;" width="28" height="22" viewBox="0 0 28 22"><text x="-1" y="20" font-family="Liberation Sans,sans-serif" font-style="italic" font-weight="bold" font-size="31" fill="#3ba7dc">m</text></svg>
<span style="left:2554.20px;top:293.15px;line-height:30px;height:30px;font-size:22.5px;color:#1a1a1a;letter-spacing:0.200px;font-family:'Liberation Sans',sans-serif;transform-origin:0 0;transform:rotate(90deg);">Maven Projects</span>
<svg style="left:2527px;top:498px;" width="26" height="28" viewBox="0 0 26 28"><g stroke="#555" stroke-width="1.3" fill="none"><path d="M13,9 L4,2 M13,9 L22,2 M13,14 L2,12 M13,14 L24,12 M13,17 L3,24 M13,17 L23,24"/></g><ellipse cx="13" cy="6" rx="3" ry="3.4" fill="#a05a8c"/><ellipse cx="13" cy="13" rx="2.6" ry="3.2" fill="#7a5aa0"/><ellipse cx="13" cy="21" rx="4.2" ry="5.5" fill="#8a5a9a"/></svg>
<span style="left:2554.20px;top:533.96px;line-height:30px;height:30px;font-size:22.5px;color:#1a1a1a;letter-spacing:-0.070px;font-family:'Liberation Sans',sans-serif;transform-origin:0 0;transform:rotate(90deg);">Ant Build</span>
<span style="left:6.30px;top:178.11px;line-height:30px;height:30px;font-size:22.5px;color:#1a1a1a;letter-spacing:0.060px;font-family:'Liberation Sans',sans-serif;transform-origin:0 0;transform:rotate(-90deg);"><u>1</u>: Project</span>
<svg style="left:8px;top:186px;" width="27" height="25" viewBox="0 0 27 25"><path d="M0,0 H9 L12,4 H22 V19 H0 Z" fill="#a9b3ba"/><rect x="14" y="11" width="13" height="13" fill="#2b2b2b" stroke="#b4b4b4" stroke-width="1"/><rect x="17" y="19.5" width="6.5" height="2" fill="#fff"/></svg>
<span style="left:6.30px;top:1138.83px;line-height:30px;height:30px;font-size:22.5px;color:#1a1a1a;letter-spacing:0.282px;font-family:'Liberation Sans',sans-serif;transform-origin:0 0;transform:rotate(-90deg);"><u>2</u>: Favorites</span>
<svg style="left:8px;top:1146px;" width="26" height="26" viewBox="0 0 26 26"><polygon points="13.0,0.5 16.2,9.1 25.4,9.5 18.2,15.2 20.6,24.0 13.0,19.0 5.4,24.0 7.8,15.2 0.6,9.5 9.8,9.1" fill="#f0993c" stroke="#c77a2a" stroke-width="1"/></svg>
<span style="left:6.30px;top:1259.90px;line-height:30px;height:30px;font-size:22.5px;color:#1a1a1a;letter-spacing:-0.710px;font-family:'Liberation Sans',sans-serif;transform-origin:0 0;transform:rotate(-90deg);">Web</span>
<svg style="left:8px;top:1270px;" width="27" height="27" viewBox="0 0 27 27"><rect x="1.5" y="1.5" width="20" height="15" fill="none" stroke="#5a5a5a" stroke-width="3"/><circle cx="17" cy="17" r="9.5" fill="#3c7fd6" stroke="#e8e8e8" stroke-width="1"/><path d="M12,12 C15,10 20,11 21,14 C19,17 17,17 16,21 C13,20 11,16 12,12 Z" fill="#f0b060"/></svg>
<span style="left:6.30px;top:1457.15px;line-height:30px;height:30px;font-size:22.5px;color:#1a1a1a;letter-spacing:0.259px;font-family:'Liberation Sans',sans-serif;transform-origin:0 0;transform:rotate(-90deg);"><u>7</u>: Structure</span>
<svg style="left:9.5px;top:1466px;" width="24" height="23" viewBox="0 0 24 23"><rect x="0" y="0" width="9" height="9" fill="#f0993c"/><rect x="14" y="0" width="9" height="9" fill="#8a9097"/><rect x="0" y="14" width="9" height="9" fill="#8a9097"/><rect x="14" y="14" width="9" height="9" fill="#8a9097"/><path d="M9,9 L14,14 M14,9 L9,14" stroke="#555" stroke-width="1.4"/></svg>
<span style="left:54.81px;top:1044.66px;line-height:33px;height:33px;font-size:25.5px;color:#000;letter-spacing:-0.181px;font-family:'Liberation Sans',sans-serif;">Run:</span>
<div style="left:114px;top:1036px;width:482px;height:48px;background:#d3d3d3;"></div>
<svg style="left:140px;top:1046px;" width="28" height="28" viewBox="0 0 28 28"><circle cx="14.0" cy="14.0" r="9.66" fill="#9dd3f1"/><rect x="11.10" y="0.00" width="5.81" height="28.00" fill="#9dd3f1" transform="rotate(0 14.0 14.0)"/><rect x="11.10" y="0.00" width="5.81" height="28.00" fill="#9dd3f1" transform="rotate(45 14.0 14.0)"/><rect x="11.10" y="0.00" width="5.81" height="28.00" fill="#9dd3f1" transform="rotate(90 14.0 14.0)"/><rect x="11.10" y="0.00" width="5.81" height="28.00" fill="#9dd3f1" transform="rotate(135 14.0 14.0)"/><circle cx="14.0" cy="14.0" r="4.13" fill="#d3d3d3"/></svg>
<span style="left:178.33px;top:1044.66px;line-height:33px;height:33px;font-size:25.5px;color:#000;letter-spacing:0.451px;font-family:'Liberation Sans',sans-serif;">demo-springboot-starter [install]</span>
<svg style="left:565.5px;top:1054.8px;" width="16" height="16" viewBox="0 0 16 16"><path d="M1,1 L15,15 M15,1 L1,15" stroke="#aaa" stroke-width="1.8" fill="none"/></svg>
<svg style="left:2424px;top:1048px;" width="24" height="24" viewBox="0 0 24 24"><circle cx="12.0" cy="12.0" r="8.40" fill="#6e6e6e"/><rect x="9.60" y="0.00" width="4.80" height="24.00" fill="#6e6e6e" transform="rotate(0 12.0 12.0)"/><rect x="9.60" y="0.00" width="4.80" height="24.00" fill="#6e6e6e" transform="rotate(45 12.0 12.0)"/><rect x="9.60" y="0.00" width="4.80" height="24.00" fill="#6e6e6e" transform="rotate(90 12.0 12.0)"/><rect x="9.60" y="0.00" width="4.80" height="24.00" fill="#6e6e6e" transform="rotate(135 12.0 12.0)"/><circle cx="12.0" cy="12.0" r="3.60" fill="#ececec"/></svg>
<svg style="left:2452px;top:1058px;" width="10" height="6" viewBox="0 0 10 6"><path d="M0,0 H10 L5.0,6 Z" fill="#6e6e6e"/></svg>
<svg style="left:2482px;top:1047px;" width="24" height="26" viewBox="0 0 24 26"><path d="M9,0 V14 M4.5,10 L9,15 L13.5,10" fill="none" stroke="#6e6e6e" stroke-width="1.8"/><rect x="0" y="19" width="23" height="6" fill="#6e6e6e"/><rect x="12" y="20.8" width="9" height="2.4" fill="#ececec"/></svg>
<svg style="left:62px;top:1102px;" width="22" height="28" viewBox="0 0 22 28"><path d="M0,0 L22,14.0 L0,28 Z" fill="#35a535"/></svg>
<svg style="left:57.5px;top:1151.5px;" width="29" height="29" viewBox="0 0 29 29"><path d="M0,9 L12,18 L0,28 Z" fill="#b8b8b8"/><circle cx="18" cy="11" r="11" fill="#b8b8b8"/><rect x="16.8" y="4" width="2.6" height="8.5" fill="#ececec"/><rect x="16.8" y="14.5" width="2.6" height="2.6" fill="#ececec"/></svg>
<svg style="left:52px;top:1198px;" width="44" height="2" viewBox="0 0 44 2"><rect x="0" y="0" width="2" height="2" fill="#8a8a8a"/><rect x="5" y="0" width="2" height="2" fill="#8a8a8a"/><rect x="10" y="0" width="2" height="2" fill="#8a8a8a"/><rect x="15" y="0" width="2" height="2" fill="#8a8a8a"/><rect x="20" y="0" width="2" height="2" fill="#8a8a8a"/><rect x="25" y="0" width="2" height="2" fill="#8a8a8a"/><rect x="30" y="0" width="2" height="2" fill="#8a8a8a"/><rect x="35" y="0" width="2" height="2" fill="#8a8a8a"/><rect x="40" y="0" width="2" height="2" fill="#8a8a8a"/></svg>
<div style="left:59.5px;top:1216px;width:25px;height:24px;background:#b8b8b8;"></div>
<div style="left:62px;top:1265.5px;width:7.6px;height:24.5px;background:#b8b8b8;"></div>
<div style="left:74px;top:1265.5px;width:7.6px;height:24.5px;background:#b8b8b8;"></div>
<svg style="left:57.5px;top:1314px;" width="29" height="28" viewBox="0 0 29 28"><rect x="0" y="3" width="29" height="24" fill="#b8b8b8"/><rect x="3" y="0" width="7" height="4" fill="#b8b8b8"/><circle cx="14.5" cy="15.5" r="7.5" fill="none" stroke="#e4e4e4" stroke-width="2"/><circle cx="14.5" cy="15.5" r="3.6" fill="#dcdcdc"/></svg>
<svg style="left:56.5px;top:1364px;" width="31" height="29" viewBox="0 0 31 29"><rect x="15" y="1" width="15" height="27" fill="#d0d0d0" stroke="#b8b8b8" stroke-width="2"/><path d="M0,11.5 H11 V6 L20,14.5 L11,23 V17.5 H0 Z" fill="#b8b8b8"/></svg>
<svg style="left:52px;top:1410px;" width="44" height="2" viewBox="0 0 44 2"><rect x="0" y="0" width="2" height="2" fill="#8a8a8a"/><rect x="5" y="0" width="2" height="2" fill="#8a8a8a"/><rect x="10" y="0" width="2" height="2" fill="#8a8a8a"/><rect x="15" y="0" width="2" height="2" fill="#8a8a8a"/><rect x="20" y="0" width="2" height="2" fill="#8a8a8a"/><rect x="25" y="0" width="2" height="2" fill="#8a8a8a"/><rect x="30" y="0" width="2" height="2" fill="#8a8a8a"/><rect x="35" y="0" width="2" height="2" fill="#8a8a8a"/><rect x="40" y="0" width="2" height="2" fill="#8a8a8a"/></svg>
<svg style="left:57.5px;top:1426px;" width="29" height="29" viewBox="0 0 29 29"><rect x="1" y="1" width="17" height="12" fill="#8fc9ec" stroke="#3573c4" stroke-width="2"/><rect x="0" y="0" width="19" height="3.5" fill="#3573c4"/><rect x="21" y="1" width="7" height="12" fill="#c8c8c8" stroke="#6e6e6e" stroke-width="2"/><rect x="1" y="18" width="27" height="9" fill="#c8c8c8" stroke="#6e6e6e" stroke-width="2"/></svg>
<svg style="left:52px;top:1472.5px;" width="44" height="2" viewBox="0 0 44 2"><rect x="0" y="0" width="2" height="2" fill="#8a8a8a"/><rect x="5" y="0" width="2" height="2" fill="#8a8a8a"/><rect x="10" y="0" width="2" height="2" fill="#8a8a8a"/><rect x="15" y="0" width="2" height="2" fill="#8a8a8a"/><rect x="20" y="0" width="2" height="2" fill="#8a8a8a"/><rect x="25" y="0" width="2" height="2" fill="#8a8a8a"/><rect x="30" y="0" width="2" height="2" fill="#8a8a8a"/><rect x="35" y="0" width="2" height="2" fill="#8a8a8a"/><rect x="40" y="0" width="2" height="2" fill="#8a8a8a"/></svg>
<svg style="left:65px;top:1486px;" width="16" height="11" viewBox="0 0 16 11"><path d="M1,1 L6,5.5 L1,10 M9,1 L14,5.5 L9,10" fill="none" stroke="#6e6e6e" stroke-width="1.7"/></svg>
<svg style="left:124px;top:1102px;" width="24" height="24" viewBox="0 0 24 24"><path d="M12,0 L24,12 H16 V24 H8 V12 H0 Z" fill="#b8b8b8"/></svg>
<svg style="left:124px;top:1152px;" width="24" height="24" viewBox="0 0 24 24"><path d="M12,24 L24,12 H16 V0 H8 V12 H0 Z" fill="#b8b8b8"/></svg>
<svg style="left:121.5px;top:1199px;overflow:visible;" width="30" height="31" viewBox="0 0 30 31"><path d="M0.5,1.8 H20.6 M8.8,9.9 H16.4 M12.9,17.6 H20.6 M0.5,25.5 H16.4" stroke="#3c3c3c" stroke-width="2"/><path d="M20.6,1.8 H26 Q28.2,1.8 28.2,4 V8 Q28.2,10.4 26,10.4 H23" fill="none" stroke="#3574c7" stroke-width="1.9"/><path d="M8.8,10 H3.4 Q1.1,10 1.1,12.2 V15.8 Q1.1,18 3.4,18 H5" fill="none" stroke="#3574c7" stroke-width="1.9"/><path d="M20.6,17.7 H26 Q28.2,17.7 28.2,20 V23.4 Q28.2,25.6 26,25.6 H23" fill="none" stroke="#3574c7" stroke-width="1.9"/><path d="M18.3,10.4 L24.2,6.6 V14.2 Z M10.4,18 L4.5,14.2 V21.8 Z M18.3,25.7 L24.4,21.9 V29.5 Z" fill="#3574c7"/></svg>
<div style="left:112.2px;top:1240.3px;width:46.6px;height:46px;background:#d0d0d0;border:1.5px solid #b2b2b2;border-radius:5px;"></div>
<svg style="left:122px;top:1249px;overflow:visible;" width="30" height="28" viewBox="0 0 30 28"><rect x="1" y="3" width="26" height="23.8" fill="#c4c4c4" stroke="#727272" stroke-width="2"/><rect x="0" y="2" width="28" height="5.6" fill="#727272"/><rect x="3.5" y="9.5" width="21" height="15" fill="#d4d4d4" opacity="0.6"/><path d="M18.3,0 H23.8 V12.5 H29.8 L21,21.3 L12.4,12.5 H18.3 Z" fill="#8a3aa8" stroke="#d0d0d0" stroke-width="0.8"/></svg>
<svg style="left:122px;top:1300px;" width="29" height="28" viewBox="0 0 29 28"><rect x="5" y="0" width="19" height="7" fill="#6e6e6e"/><path d="M0,7 H29 V20 H24 V14 H5 V20 H0 Z" fill="#3b86d6"/><rect x="6" y="14.5" width="17" height="13" fill="#e8e8e8" stroke="#6e6e6e" stroke-width="2"/><path d="M10,19 H19 M10,23 H19" stroke="#444" stroke-width="1.6"/></svg>
<svg style="left:123px;top:1349px;" width="27" height="30" viewBox="0 0 27 30"><path d="M8,4 C8,-1 19,-1 19,4" fill="none" stroke="#555" stroke-width="2"/><rect x="0" y="5" width="27" height="4" fill="#555"/><path d="M1.5,11 H25.5 L23.5,27 C23,30 4,30 3.5,27 Z" fill="#3b86d6"/><path d="M7.5,13 V26 M11.5,13 V26 M15.5,13 V26 M19.5,13 V26" stroke="#cfe3f7" stroke-width="1.6"/></svg>
<div style="left:170px;top:1085.5px;width:2348px;height:14px;overflow:hidden;"><span class="con" style="left:22.4px;top:-22.71px;width:2325px;">[INFO] Building jar: /Peng/www/demo-springboot-starter/target/demo-springboot-starter-0.0.1-SNAPSHOT.jar</span></div>
<span class="con" style="left:192.4px;top:1092.19px;width:2324.6px;color:#000;">[INFO] </span>
<span class="con" style="left:192.4px;top:1122.19px;width:2324.6px;color:#000;">[INFO] --- maven-install-plugin:2.5.2:install (default-install) @ demo-springboot-starter ---</span>
<div style="left:291.2px;top:1136.95px;width:40.4px;height:2.3px;background:repeating-linear-gradient(90deg,#000 0,#000 12.4px,transparent 12.4px,transparent 14px)"></div>
<div style="left:1453.2px;top:1136.95px;width:40.4px;height:2.3px;background:repeating-linear-gradient(90deg,#000 0,#000 12.4px,transparent 12.4px,transparent 14px)"></div>
<span class="con" style="left:192.4px;top:1152.19px;width:2324.6px;color:#000;">[INFO] Installing /Peng/www/demo-springboot-starter/target/demo-springboot-starter-0.0.1-SNAPSHOT.jar to /Users/xiaodai/.m2/repository/com/pdai/demo-springboot-starter/0.0.1-SNAPSHOT/demo-springboot-starter-0.0.1-SNAPSHOT.jar</span>
<span class="con" style="left:192.4px;top:1182.19px;width:2324.6px;color:#000;">[INFO] Installing /Peng/www/demo-springboot-starter/pom.xml to /Users/xiaodai/.m2/repository/com/pdai/demo-springboot-starter/0.0.1-SNAPSHOT/demo-springboot-starter-0.0.1-SNAPSHOT.pom</span>
<span class="con" style="left:192.4px;top:1212.19px;width:2324.6px;color:#000;">[INFO] ------------------------------------------------------------------------</span>
<div style="left:291.2px;top:1226.95px;width:1006.4px;height:2.3px;background:repeating-linear-gradient(90deg,#000 0,#000 12.4px,transparent 12.4px,transparent 14px)"></div>
<span class="con" style="left:192.4px;top:1242.19px;width:2324.6px;color:#000;">[INFO] BUILD SUCCESS</span>
<span class="con" style="left:192.4px;top:1272.19px;width:2324.6px;color:#000;">[INFO] ------------------------------------------------------------------------</span>
<div style="left:291.2px;top:1286.95px;width:1006.4px;height:2.3px;background:repeating-linear-gradient(90deg,#000 0,#000 12.4px,transparent 12.4px,transparent 14px)"></div>
<span class="con" style="left:192.4px;top:1302.19px;width:2324.6px;color:#000;">[INFO] Total time: 5.570 s</span>
<span class="con" style="left:192.4px;top:1332.19px;width:2324.6px;color:#000;">[INFO] Finished at: 2019-08-31T21:56:42+08:00</span>
<span class="con" style="left:192.4px;top:1362.19px;width:2324.6px;color:#000;">[INFO] Final Memory: 23M/278M</span>
<span class="con" style="left:192.4px;top:1392.19px;width:2324.6px;color:#000;">[INFO] ------------------------------------------------------------------------</span>
<div style="left:291.2px;top:1406.95px;width:1006.4px;height:2.3px;background:repeating-linear-gradient(90deg,#000 0,#000 12.4px,transparent 12.4px,transparent 14px)"></div>
<span class="con" style="left:192.4px;top:1452.19px;width:2324.6px;color:#00007a;">Process finished with exit code 0</span>
<svg style="left:62px;top:1523.5px;" width="26" height="26" viewBox="0 0 26 26"><rect x="1" y="1" width="24" height="24" fill="#3a3a3a" stroke="#8a8a8a" stroke-width="2"/><rect x="0" y="0" width="26" height="5" fill="#8a8a8a"/><path d="M5.5,11 L10.5,14.5 L5.5,18" fill="none" stroke="#fff" stroke-width="1.7"/><rect x="12" y="17" width="6.5" height="1.7" fill="#fff"/></svg>
<span style="left:96.89px;top:1521.00px;line-height:30px;height:30px;font-size:22.8px;color:#000;letter-spacing:0.093px;font-family:'Liberation Sans',sans-serif;">Terminal</span>
<svg style="left:227px;top:1524px;" width="28" height="26" viewBox="0 0 28 26"><path d="M2,20 C-2,8 8,3 18,4 C22,4 25,2 26.5,0 C29,10 26,25 12,25 C8,25 5,23 2,20 Z" fill="#6cbf5c"/><path d="M4,21 C10,20 17,15 21,8" fill="none" stroke="#e8e8e8" stroke-width="1.7"/></svg>
<span style="left:261.66px;top:1521.00px;line-height:30px;height:30px;font-size:22.8px;color:#000;letter-spacing:0.540px;font-family:'Liberation Sans',sans-serif;">Spring</span>
<svg style="left:374px;top:1524px;" width="27" height="27" viewBox="0 0 27 27"><rect x="0" y="0" width="22" height="21" fill="#3c7fd0"/><rect x="11" y="12" width="15.5" height="14.5" fill="#7a7a00" stroke="#e8e8e8" stroke-width="1"/><text x="12.6" y="24.2" font-family="Liberation Sans,sans-serif" font-weight="bold" font-size="11" fill="#f4f4c0" letter-spacing="-0.3">EE</text></svg>
<span style="left:408.34px;top:1521.00px;line-height:30px;height:30px;font-size:22.8px;color:#000;letter-spacing:0.183px;font-family:'Liberation Sans',sans-serif;">Java Enterprise</span>
<div style="left:590px;top:1514px;width:136px;height:44px;background:#b0b0b0;"></div>
<svg style="left:613px;top:1523.3px;" width="22" height="27" viewBox="0 0 22 27"><path d="M0,0 L22,13.5 L0,27 Z" fill="#35a535"/></svg>
<span style="left:644.18px;top:1521.00px;line-height:30px;height:30px;font-size:22.8px;color:#000;letter-spacing:-0.454px;font-family:'Liberation Sans',sans-serif;"><u>4</u>: Run</span>
<svg style="left:748px;top:1523px;" width="28" height="28" viewBox="0 0 28 28"><circle cx="15" cy="15" r="8.5" fill="#f0a060"/><path d="M6,13 C6,4 24,4 24,13 C20,9 12,8 6,13 Z" fill="#4a4a4a"/><path d="M5,27 C5,21 25,21 25,27 Z" fill="#3b86d6"/><circle cx="12" cy="15.5" r="1.2" fill="#333"/><circle cx="18" cy="15.5" r="1.2" fill="#333"/><circle cx="6" cy="6" r="5.8" fill="#fff" stroke="#666" stroke-width="1.2"/><path d="M3,4.2 H9 M3,6.2 H9 M3,8.2 H9" stroke="#555" stroke-width="1"/></svg>
<span style="left:781.64px;top:1521.00px;line-height:30px;height:30px;font-size:22.8px;color:#000;letter-spacing:-0.294px;font-family:'Liberation Sans',sans-serif;"><u>6</u>: TODO</span>
<svg style="left:2356px;top:1521.5px;" width="32" height="29" viewBox="0 0 32 29"><circle cx="14.5" cy="14" r="14" fill="#6cbf5c"/><path d="M20,24 L31,28.5 L25,19 Z" fill="#6cbf5c"/><text x="14.3" y="20.6" text-anchor="middle" font-family="DejaVu Sans,Liberation Sans,sans-serif" font-weight="bold" font-size="18" fill="#2b2b2b">1</text></svg>
<span style="left:2395.13px;top:1520.80px;line-height:30px;height:30px;font-size:22.8px;color:#000;letter-spacing:0.020px;font-family:'Liberation Sans',sans-serif;">Event Log</span>
<svg style="left:10px;top:1566px;" width="28" height="28" viewBox="0 0 28 28"><rect x="1.25" y="1.25" width="25.5" height="21" fill="#bfbfbf" stroke="#4a4a4a" stroke-width="2.5"/><rect x="0" y="25" width="28" height="2.2" fill="#4a4a4a"/></svg>
<span style="left:60.83px;top:1565.00px;line-height:30px;height:30px;font-size:22.8px;color:#1a1a1a;letter-spacing:0.175px;font-family:'Liberation Sans',sans-serif;">File converted: File converted successfully (8 minutes ago)</span>
<span style="left:2228.76px;top:1565.00px;line-height:30px;height:30px;font-size:22.8px;color:#1a1a1a;letter-spacing:0.332px;font-family:'Liberation Sans',sans-serif;">16:22</span>
<span style="left:2309.43px;top:1565.00px;line-height:30px;height:30px;font-size:22.8px;color:#1a1a1a;letter-spacing:-2.124px;font-family:'Liberation Sans',sans-serif;">LF</span>
<svg style="left:2336px;top:1571.5px;" width="10" height="17" viewBox="0 0 10 17"><path d="M0,7 L5,0 L10,7 Z M0,10 L5,17 L10,10 Z" fill="#3a3a3a"/></svg>
<span style="left:2367.24px;top:1565.00px;line-height:30px;height:30px;font-size:22.8px;color:#1a1a1a;letter-spacing:0.289px;font-family:'Liberation Sans',sans-serif;">UTF-8</span>
<svg style="left:2435.5px;top:1571.5px;" width="10" height="17" viewBox="0 0 10 17"><path d="M0,7 L5,0 L10,7 Z M0,10 L5,17 L10,10 Z" fill="#3a3a3a"/></svg>
<svg style="left:2472px;top:1571px;" width="20" height="19" viewBox="0 0 20 19"><path d="M2.5,9 V5.5 C2.5,0 11,0 11,5.5" fill="none" stroke="#5e5e5e" stroke-width="2"/><rect x="5.5" y="8.5" width="14" height="10.5" rx="2" fill="#5e5e5e"/><path d="M9.5,12 H15.5 M12.5,12 V16.5" stroke="#e9e9e9" stroke-width="1.8"/></svg>
<svg style="left:2520px;top:1565.5px;" width="25" height="28" viewBox="0 0 25 28"><path d="M5,11 V5 C5,-0.5 20,-0.5 20,5 V11" fill="none" stroke="#5e5e5e" stroke-width="1.8"/><circle cx="12.5" cy="6" r="1.9" fill="#5e5e5e"/><path d="M0,11 H25" stroke="#5e5e5e" stroke-width="1.8"/><path d="M4.5,12 C3,20 7,24 12.5,24 C18,24 22,20 20.5,12" fill="none" stroke="#5e5e5e" stroke-width="1.8"/><path d="M8,15 L11,16.5 M17,15 L14,16.5" stroke="#5e5e5e" stroke-width="1.8"/><path d="M8.5,21 C10,18.5 15,18.5 16.5,21" fill="none" stroke="#5e5e5e" stroke-width="1.8"/><path d="M3,28 L8,24 H17 L22,28 Z" fill="#5e5e5e"/></svg>
<svg style="left:245px;top:374.9px" width="424.60" height="114.10"><path d="M0,0 H424.60 V114.10 H0 Z M15.90,15.60 V98.40 H408.80 V15.60 Z" fill="#b9164b" fill-rule="evenodd"/></svg>
<svg style="left:222.5px;top:589.6px" width="324.90" height="55.10"><path d="M0,0 H324.90 V55.10 H0 Z M15.90,15.90 V38.90 H309.00 V15.90 Z" fill="#b9164b" fill-rule="evenodd"/></svg>
<svg style="left:1737px;top:157.4px" width="396.90" height="75.00"><path d="M0,0 H396.90 V75.00 H0 Z M15.90,15.80 V59.20 H381.00 V15.80 Z" fill="#b9164b" fill-rule="evenodd"/></svg>
<svg style="left:1800px;top:479px" width="174.70" height="66.30"><path d="M0,0 H174.70 V66.30 H0 Z M15.40,15.50 V50.40 H160.00 V15.50 Z" fill="#b9164b" fill-rule="evenodd"/></svg>
</body></html>
